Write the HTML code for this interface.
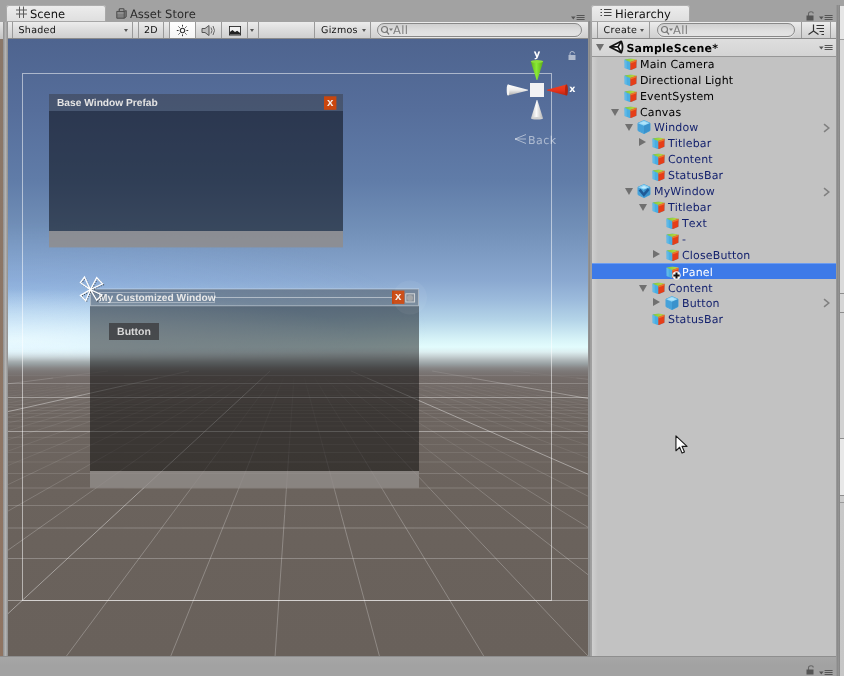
<!DOCTYPE html>
<html><head><meta charset="utf-8"><title>Unity - SampleScene</title>
<style>
html,body{margin:0;padding:0}
body{will-change:transform;width:844px;height:676px;overflow:hidden;background:#a2a2a2;position:relative;font-family:"DejaVu Sans","Liberation Sans",sans-serif;font-size:11px;color:#000;font-kerning:none;font-variant-ligatures:none;text-rendering:geometricPrecision}
.abs{position:absolute}
#leftstrip{left:0;top:39px;width:3px;height:617px;background:linear-gradient(#8a7768,#8f7462)}
#leftbar{left:3px;top:22px;width:5px;height:634px;background:linear-gradient(90deg,#8e8e8e,#b4b4b4 50%,#8e8e8e)}
#lefttb{left:0;top:22px;width:3px;height:17px;background:linear-gradient(#e6e6e6,#c4c4c4)}
.tab{position:absolute;top:5px;height:17px;border-radius:3px 3px 0 0;background:linear-gradient(#ededed,#dedede);box-shadow:0 0 0 1px rgba(120,120,120,.55) inset}
.tabtxt{position:absolute;font-size:11.5px;white-space:nowrap;line-height:14px;color:#111}
.tb{position:absolute;top:22px;height:17px;background:linear-gradient(#ececec 0%,#dedede 45%,#cfcfcf 100%);border-bottom:1px solid #8a8a8a;box-sizing:border-box}
.sep{position:absolute;top:0;width:1px;height:16px;background:#9a9a9a}
.tbt{position:absolute;top:3px;font-size:9.5px;line-height:12px;white-space:nowrap;color:#111;letter-spacing:.3px}
.dd{position:absolute;width:0;height:0;border-left:2.5px solid transparent;border-right:2.5px solid transparent;border-top:3px solid #555}
.search{position:absolute;top:1px;height:14px;border-radius:7px;border:1px solid #888;background:linear-gradient(#cfcfcf,#e0e0e0 60%,#e4e4e4);box-sizing:border-box;box-shadow:0 1px 0 rgba(255,255,255,.5)}
#scene{left:8px;top:39px;width:580px;height:617px;overflow:hidden;background:linear-gradient(180deg,#4e648f 0px,#566e9b 71px,#607ca8 141px,#7290b8 191px,#8aa8d0 241px,#9cbbdc 261px,#b4d4e8 281px,#d8f4f8 301px,#e2fcfd 308px,#dceef0 313px,#c8d4d6 317px,#b0b8ba 321px,#98a0a2 325px,#878686 329px,#7d7978 332px,#746c69 338px,#6f6763 350px,#6d6560 380px,#6b635d 450px,#6a625c 500px,#69615b 617px)}
#glow{left:0;top:0;width:580px;height:330px;background:radial-gradient(ellipse 340px 52px at 10px 302px,rgba(240,253,255,.8),rgba(240,253,255,0) 100%),radial-gradient(ellipse 420px 110px at 0px 290px,rgba(150,195,255,.35),rgba(150,195,255,0) 100%);-webkit-mask-image:linear-gradient(180deg,#000 0,#000 309px,transparent 323px);mask-image:linear-gradient(180deg,#000 0,#000 309px,transparent 323px)}
#hier{left:592px;top:39px;width:244px;height:617px;background:#c2c2c2;overflow:hidden}
.row{position:absolute;left:0;width:244px;height:16px}
.row.sel{background:#3d7ae8;box-shadow:0 1px 0 #6c9cf0 inset}
.lb{position:absolute;top:3px;line-height:14px;white-space:nowrap;font-size:11px;letter-spacing:.15px}
.icw{position:absolute;top:2px;margin-left:-0.7px;width:15px;height:13px}
.ic{display:block}
.plus{position:absolute;top:6.5px;margin-left:-0.3px}
.ad{position:absolute;top:5.5px;margin-left:-0.5px;width:0;height:0;border-left:4.3px solid transparent;border-right:4.3px solid transparent;border-top:7.5px solid #707070}
.ar{position:absolute;top:3.5px;margin-left:-1px;width:0;height:0;border-top:4.5px solid transparent;border-bottom:4.5px solid transparent;border-left:7.5px solid #707070}
.chev{position:absolute;left:231px;top:4px}
</style></head>
<body>
<svg class="abs" width="0" height="0" style="left:0;top:0"><defs><linearGradient id="ct" x1="0" y1="0" x2="1" y2="0"><stop offset="0" stop-color="#7cc440"/><stop offset=".55" stop-color="#a4d43c"/><stop offset="1" stop-color="#e0c838"/></linearGradient></defs></svg>
<!-- left neighbouring panel sliver -->
<div id="lefttb" class="abs"></div>
<div id="leftstrip" class="abs"></div>
<div id="leftbar" class="abs"></div>

<!-- Scene tab strip -->
<div class="tab" style="left:6px;width:100px"></div>
<svg class="abs" style="left:15px;top:6.2px" width="13" height="13" viewBox="0 0 13 13"><path d="M4.5 0.5V12M8.5 0.5V12M1 4H12M1 8H12" stroke="#5a5a5a" stroke-width="1" fill="none"/></svg>
<div class="tabtxt" style="left:30px;top:7px">Scene</div>
<svg class="abs" style="left:116.4px;top:7.6px" width="11" height="11" viewBox="0 0 11 11"><path d="M3.2 3.4V1.6Q3.2 0.7 4.2 0.7H7Q8 0.7 8 1.6V3.4" stroke="#4a4a4a" stroke-width="1.1" fill="none"/><path d="M0.8 3.4H8.2L10.2 2.6V8.8L8.2 10.2H0.8Z" fill="#7e7e7e" stroke="#4a4a4a" stroke-width="1" stroke-linejoin="round"/><path d="M8.2 3.4V10.2" stroke="#4a4a4a" stroke-width="0.9"/><path d="M1.4 5H7.6" stroke="#a8a8a8" stroke-width="0.8"/></svg>
<div class="tabtxt" style="left:130px;top:7px;color:#2a2a2a">Asset Store</div>
<svg class="abs" style="left:571px;top:14.6px" width="14" height="6" viewBox="0 0 14 6"><path d="M0 1.6H4.6L2.3 4.6Z" fill="#555"/><path d="M5.6 0.5H13.6M5.6 2.5H13.6M5.6 4.5H13.6" stroke="#555" stroke-width="1"/></svg>

<!-- Scene toolbar -->
<div class="tb" style="left:8px;width:580px">
  <div class="sep" style="left:4px"></div>
  <div class="tbt" style="left:10.5px">Shaded</div>
  <div class="dd" style="left:116.4px;top:6.5px"></div>
  <div class="sep" style="left:124px"></div>
  <div class="sep" style="left:130px"></div>
  <div class="tbt" style="left:136px">2D</div>
  <div class="sep" style="left:155px"></div>
  <div class="abs" style="left:162px;top:0;width:25px;height:16px;background:linear-gradient(#ffffff,#f4f4f4)"></div>
  <div class="sep" style="left:161px"></div>
  <svg class="abs" style="left:168px;top:2px" width="13" height="13" viewBox="0 0 13 13"><circle cx="6.5" cy="6.5" r="2.2" fill="none" stroke="#333" stroke-width="1.1"/><path d="M6.5 0.8V2.6M6.5 10.4V12.2M0.8 6.5H2.6M10.4 6.5H12.2M2.5 2.5L3.7 3.7M9.3 9.3L10.5 10.5M2.5 10.5L3.7 9.3M9.3 3.7L10.5 2.5" stroke="#333" stroke-width="1"/></svg>
  <div class="sep" style="left:187px"></div>
  <svg class="abs" style="left:193px;top:2px" width="16" height="13" viewBox="0 0 16 13"><path d="M1 4.5H4L8 1.5V11.5L4 8.5H1Z" fill="#bdbdbd" stroke="#555" stroke-width="1"/><path d="M10 3.5Q12 6.5 10 9.5M12 2Q15 6.5 12 11" stroke="#666" stroke-width="1" fill="none"/></svg>
  <div class="sep" style="left:213px"></div>
  <svg class="abs" style="left:221px;top:4px" width="12" height="9.5" viewBox="0 0 14 11"><rect x="0.5" y="0.5" width="13" height="10" fill="#f2f2f2" stroke="#222" stroke-width="1"/><path d="M1 10V7L4 4.5L7 7L9.5 5.5L13 8V10Z" fill="#222"/></svg>
  <div class="sep" style="left:239px"></div>
  <div class="dd" style="left:242px;top:6.5px"></div>
  <div class="sep" style="left:250px"></div>
  <div class="sep" style="left:306px"></div>
  <div class="tbt" style="left:313px">Gizmos</div>
  <div class="dd" style="left:353.5px;top:6.5px"></div>
  <div class="sep" style="left:362px"></div>
  <div class="search" style="left:369px;width:204.5px"></div>
  <svg class="abs" style="left:372px;top:3px" width="14" height="11" viewBox="0 0 14 11"><circle cx="4.5" cy="4.5" r="3" fill="none" stroke="#777" stroke-width="1.2"/><path d="M6.7 6.7L9 9.5" stroke="#777" stroke-width="1.3"/><path d="M9 3.5H13L11 6Z" fill="#777"/></svg>
  <div class="tbt" style="left:385px;top:2px;color:#7c7c7c;font-size:11.5px;letter-spacing:.3px">All</div>
</div>

<!-- Scene view -->
<div id="scene" class="abs">
<div id="glow" class="abs"></div>
<svg class="abs" style="left:0;top:0" width="580" height="617" viewBox="8 39 580 617">
<defs>
<linearGradient id="gG" x1="0" y1="0" x2="1" y2="0"><stop offset="0" stop-color="#5fb01c"/><stop offset=".45" stop-color="#8aea34"/><stop offset="1" stop-color="#5aa818"/></linearGradient>
<linearGradient id="gR" x1="0" y1="0" x2="0" y2="1"><stop offset="0" stop-color="#f0401c"/><stop offset=".5" stop-color="#e8341c"/><stop offset="1" stop-color="#b82410"/></linearGradient>
<linearGradient id="gW1" x1="0" y1="0" x2="0" y2="1"><stop offset="0" stop-color="#ffffff"/><stop offset=".5" stop-color="#ececec"/><stop offset="1" stop-color="#a8a8a8"/></linearGradient>
<linearGradient id="gW2" x1="0" y1="0" x2="1" y2="0"><stop offset="0" stop-color="#c4c4c4"/><stop offset=".45" stop-color="#fafafa"/><stop offset="1" stop-color="#b4b4b4"/></linearGradient>
<linearGradient id="fade" gradientUnits="userSpaceOnUse" x1="0" y1="352" x2="0" y2="520"><stop offset="0" stop-color="#fff" stop-opacity="0"/><stop offset="0.12" stop-color="#fff" stop-opacity="0.35"/><stop offset="0.5" stop-color="#fff" stop-opacity="0.8"/><stop offset="1" stop-color="#fff" stop-opacity="1"/></linearGradient>
<mask id="gm" maskUnits="userSpaceOnUse" x="8" y="39" width="580" height="617"><rect x="8" y="352" width="580" height="304" fill="url(#fade)"/></mask>
</defs>
<!-- grid -->
<g stroke="#fff" stroke-width="1">
<line x1="108.1" y1="371.0" x2="53.3" y2="378.0" stroke-opacity="0.059"/>
<line x1="53.3" y1="378.0" x2="8.0" y2="383.8" stroke-opacity="0.160"/>
<line x1="17.0" y1="386.0" x2="8.0" y2="387.3" stroke-opacity="0.015"/>
<line x1="30.1" y1="386.0" x2="8.0" y2="389.2" stroke-opacity="0.020"/>
<line x1="43.3" y1="386.0" x2="8.0" y2="391.4" stroke-opacity="0.025"/>
<line x1="56.4" y1="386.0" x2="8.0" y2="393.9" stroke-opacity="0.031"/>
<line x1="69.6" y1="386.0" x2="17.4" y2="395.0" stroke-opacity="0.034"/>
<line x1="17.4" y1="395.0" x2="8.0" y2="396.6" stroke-opacity="0.045"/>
<line x1="82.8" y1="386.0" x2="33.6" y2="395.0" stroke-opacity="0.036"/>
<line x1="33.6" y1="395.0" x2="8.0" y2="399.7" stroke-opacity="0.050"/>
<line x1="95.9" y1="386.0" x2="49.8" y2="395.0" stroke-opacity="0.038"/>
<line x1="49.8" y1="395.0" x2="8.0" y2="403.1" stroke-opacity="0.056"/>
<line x1="147.4" y1="378.0" x2="109.1" y2="386.0" stroke-opacity="0.013"/>
<line x1="109.1" y1="386.0" x2="66.0" y2="395.0" stroke-opacity="0.040"/>
<line x1="66.0" y1="395.0" x2="18.0" y2="405.0" stroke-opacity="0.059"/>
<line x1="18.0" y1="405.0" x2="8.0" y2="407.1" stroke-opacity="0.068"/>
<line x1="189.1" y1="371.0" x2="157.9" y2="378.0" stroke-opacity="0.108"/>
<line x1="157.9" y1="378.0" x2="122.3" y2="386.0" stroke-opacity="0.233"/>
<line x1="122.3" y1="386.0" x2="82.2" y2="395.0" stroke-opacity="0.321"/>
<line x1="82.2" y1="395.0" x2="37.6" y2="405.0" stroke-opacity="0.383"/>
<line x1="37.6" y1="405.0" x2="8.0" y2="411.6" stroke-opacity="0.400"/>
<line x1="168.4" y1="378.0" x2="135.4" y2="386.0" stroke-opacity="0.016"/>
<line x1="135.4" y1="386.0" x2="98.4" y2="395.0" stroke-opacity="0.044"/>
<line x1="98.4" y1="395.0" x2="57.2" y2="405.0" stroke-opacity="0.063"/>
<line x1="57.2" y1="405.0" x2="11.9" y2="416.0" stroke-opacity="0.075"/>
<line x1="11.9" y1="416.0" x2="8.0" y2="416.9" stroke-opacity="0.075"/>
<line x1="178.8" y1="378.0" x2="148.6" y2="386.0" stroke-opacity="0.017"/>
<line x1="148.6" y1="386.0" x2="114.6" y2="395.0" stroke-opacity="0.045"/>
<line x1="114.6" y1="395.0" x2="76.8" y2="405.0" stroke-opacity="0.065"/>
<line x1="76.8" y1="405.0" x2="35.2" y2="416.0" stroke-opacity="0.075"/>
<line x1="35.2" y1="416.0" x2="8.0" y2="423.2" stroke-opacity="0.075"/>
<line x1="189.3" y1="378.0" x2="161.7" y2="386.0" stroke-opacity="0.018"/>
<line x1="161.7" y1="386.0" x2="130.8" y2="395.0" stroke-opacity="0.047"/>
<line x1="130.8" y1="395.0" x2="96.3" y2="405.0" stroke-opacity="0.067"/>
<line x1="96.3" y1="405.0" x2="58.5" y2="416.0" stroke-opacity="0.075"/>
<line x1="58.5" y1="416.0" x2="17.1" y2="428.0" stroke-opacity="0.075"/>
<line x1="17.1" y1="428.0" x2="8.0" y2="430.7" stroke-opacity="0.075"/>
<line x1="199.7" y1="378.0" x2="174.9" y2="386.0" stroke-opacity="0.020"/>
<line x1="174.9" y1="386.0" x2="147.0" y2="395.0" stroke-opacity="0.048"/>
<line x1="147.0" y1="395.0" x2="115.9" y2="405.0" stroke-opacity="0.068"/>
<line x1="115.9" y1="405.0" x2="81.7" y2="416.0" stroke-opacity="0.075"/>
<line x1="81.7" y1="416.0" x2="44.5" y2="428.0" stroke-opacity="0.075"/>
<line x1="44.5" y1="428.0" x2="8.0" y2="439.8" stroke-opacity="0.075"/>
<line x1="210.2" y1="378.0" x2="188.1" y2="386.0" stroke-opacity="0.020"/>
<line x1="188.1" y1="386.0" x2="163.2" y2="395.0" stroke-opacity="0.049"/>
<line x1="163.2" y1="395.0" x2="135.5" y2="405.0" stroke-opacity="0.070"/>
<line x1="135.5" y1="405.0" x2="105.0" y2="416.0" stroke-opacity="0.075"/>
<line x1="105.0" y1="416.0" x2="71.8" y2="428.0" stroke-opacity="0.075"/>
<line x1="71.8" y1="428.0" x2="35.8" y2="441.0" stroke-opacity="0.075"/>
<line x1="35.8" y1="441.0" x2="8.0" y2="451.1" stroke-opacity="0.075"/>
<line x1="220.7" y1="378.0" x2="201.2" y2="386.0" stroke-opacity="0.021"/>
<line x1="201.2" y1="386.0" x2="179.4" y2="395.0" stroke-opacity="0.050"/>
<line x1="179.4" y1="395.0" x2="155.1" y2="405.0" stroke-opacity="0.071"/>
<line x1="155.1" y1="405.0" x2="128.3" y2="416.0" stroke-opacity="0.075"/>
<line x1="128.3" y1="416.0" x2="99.2" y2="428.0" stroke-opacity="0.075"/>
<line x1="99.2" y1="428.0" x2="67.6" y2="441.0" stroke-opacity="0.075"/>
<line x1="67.6" y1="441.0" x2="33.5" y2="455.0" stroke-opacity="0.075"/>
<line x1="33.5" y1="455.0" x2="8.0" y2="465.5" stroke-opacity="0.075"/>
<line x1="231.1" y1="378.0" x2="214.4" y2="386.0" stroke-opacity="0.022"/>
<line x1="214.4" y1="386.0" x2="195.6" y2="395.0" stroke-opacity="0.051"/>
<line x1="195.6" y1="395.0" x2="174.6" y2="405.0" stroke-opacity="0.072"/>
<line x1="174.6" y1="405.0" x2="151.6" y2="416.0" stroke-opacity="0.075"/>
<line x1="151.6" y1="416.0" x2="126.5" y2="428.0" stroke-opacity="0.075"/>
<line x1="126.5" y1="428.0" x2="99.3" y2="441.0" stroke-opacity="0.075"/>
<line x1="99.3" y1="441.0" x2="70.0" y2="455.0" stroke-opacity="0.075"/>
<line x1="70.0" y1="455.0" x2="38.6" y2="470.0" stroke-opacity="0.095"/>
<line x1="38.6" y1="470.0" x2="8.0" y2="484.6" stroke-opacity="0.124"/>
<line x1="241.6" y1="378.0" x2="227.6" y2="386.0" stroke-opacity="0.023"/>
<line x1="227.6" y1="386.0" x2="211.8" y2="395.0" stroke-opacity="0.052"/>
<line x1="211.8" y1="395.0" x2="194.2" y2="405.0" stroke-opacity="0.073"/>
<line x1="194.2" y1="405.0" x2="174.9" y2="416.0" stroke-opacity="0.075"/>
<line x1="174.9" y1="416.0" x2="153.8" y2="428.0" stroke-opacity="0.075"/>
<line x1="153.8" y1="428.0" x2="131.0" y2="441.0" stroke-opacity="0.075"/>
<line x1="131.0" y1="441.0" x2="106.4" y2="455.0" stroke-opacity="0.075"/>
<line x1="106.4" y1="455.0" x2="80.1" y2="470.0" stroke-opacity="0.107"/>
<line x1="80.1" y1="470.0" x2="45.0" y2="490.0" stroke-opacity="0.143"/>
<line x1="45.0" y1="490.0" x2="8.0" y2="511.1" stroke-opacity="0.174"/>
<line x1="252.1" y1="378.0" x2="240.7" y2="386.0" stroke-opacity="0.023"/>
<line x1="240.7" y1="386.0" x2="228.0" y2="395.0" stroke-opacity="0.052"/>
<line x1="228.0" y1="395.0" x2="213.8" y2="405.0" stroke-opacity="0.074"/>
<line x1="213.8" y1="405.0" x2="198.2" y2="416.0" stroke-opacity="0.075"/>
<line x1="198.2" y1="416.0" x2="181.2" y2="428.0" stroke-opacity="0.075"/>
<line x1="181.2" y1="428.0" x2="162.7" y2="441.0" stroke-opacity="0.075"/>
<line x1="162.7" y1="441.0" x2="142.9" y2="455.0" stroke-opacity="0.077"/>
<line x1="142.9" y1="455.0" x2="121.6" y2="470.0" stroke-opacity="0.118"/>
<line x1="121.6" y1="470.0" x2="93.3" y2="490.0" stroke-opacity="0.155"/>
<line x1="93.3" y1="490.0" x2="57.8" y2="515.0" stroke-opacity="0.190"/>
<line x1="57.8" y1="515.0" x2="15.3" y2="545.0" stroke-opacity="0.220"/>
<line x1="15.3" y1="545.0" x2="8.0" y2="550.2" stroke-opacity="0.234"/>
<line x1="270.1" y1="371.0" x2="262.5" y2="378.0" stroke-opacity="0.131"/>
<line x1="262.5" y1="378.0" x2="253.9" y2="386.0" stroke-opacity="0.263"/>
<line x1="253.9" y1="386.0" x2="244.2" y2="395.0" stroke-opacity="0.356"/>
<line x1="244.2" y1="395.0" x2="233.4" y2="405.0" stroke-opacity="0.400"/>
<line x1="233.4" y1="405.0" x2="221.5" y2="416.0" stroke-opacity="0.400"/>
<line x1="221.5" y1="416.0" x2="208.5" y2="428.0" stroke-opacity="0.400"/>
<line x1="208.5" y1="428.0" x2="194.5" y2="441.0" stroke-opacity="0.400"/>
<line x1="194.5" y1="441.0" x2="179.3" y2="455.0" stroke-opacity="0.400"/>
<line x1="179.3" y1="455.0" x2="163.1" y2="470.0" stroke-opacity="0.400"/>
<line x1="163.1" y1="470.0" x2="141.5" y2="490.0" stroke-opacity="0.400"/>
<line x1="141.5" y1="490.0" x2="114.5" y2="515.0" stroke-opacity="0.400"/>
<line x1="114.5" y1="515.0" x2="82.1" y2="545.0" stroke-opacity="0.400"/>
<line x1="82.1" y1="545.0" x2="44.3" y2="580.0" stroke-opacity="0.400"/>
<line x1="44.3" y1="580.0" x2="8.0" y2="613.6" stroke-opacity="0.400"/>
<line x1="273.0" y1="378.0" x2="267.0" y2="386.0" stroke-opacity="0.024"/>
<line x1="267.0" y1="386.0" x2="260.4" y2="395.0" stroke-opacity="0.053"/>
<line x1="260.4" y1="395.0" x2="252.9" y2="405.0" stroke-opacity="0.075"/>
<line x1="252.9" y1="405.0" x2="244.8" y2="416.0" stroke-opacity="0.075"/>
<line x1="244.8" y1="416.0" x2="235.8" y2="428.0" stroke-opacity="0.075"/>
<line x1="235.8" y1="428.0" x2="226.2" y2="441.0" stroke-opacity="0.075"/>
<line x1="226.2" y1="441.0" x2="215.8" y2="455.0" stroke-opacity="0.091"/>
<line x1="215.8" y1="455.0" x2="204.7" y2="470.0" stroke-opacity="0.134"/>
<line x1="204.7" y1="470.0" x2="189.8" y2="490.0" stroke-opacity="0.173"/>
<line x1="189.8" y1="490.0" x2="171.2" y2="515.0" stroke-opacity="0.210"/>
<line x1="171.2" y1="515.0" x2="149.0" y2="545.0" stroke-opacity="0.243"/>
<line x1="149.0" y1="545.0" x2="123.0" y2="580.0" stroke-opacity="0.250"/>
<line x1="123.0" y1="580.0" x2="93.3" y2="620.0" stroke-opacity="0.250"/>
<line x1="93.3" y1="620.0" x2="66.5" y2="656.0" stroke-opacity="0.250"/>
<line x1="283.4" y1="378.0" x2="280.2" y2="386.0" stroke-opacity="0.024"/>
<line x1="280.2" y1="386.0" x2="276.6" y2="395.0" stroke-opacity="0.054"/>
<line x1="276.6" y1="395.0" x2="272.5" y2="405.0" stroke-opacity="0.075"/>
<line x1="272.5" y1="405.0" x2="268.0" y2="416.0" stroke-opacity="0.075"/>
<line x1="268.0" y1="416.0" x2="263.2" y2="428.0" stroke-opacity="0.075"/>
<line x1="263.2" y1="428.0" x2="257.9" y2="441.0" stroke-opacity="0.075"/>
<line x1="257.9" y1="441.0" x2="252.2" y2="455.0" stroke-opacity="0.095"/>
<line x1="252.2" y1="455.0" x2="246.2" y2="470.0" stroke-opacity="0.138"/>
<line x1="246.2" y1="470.0" x2="238.1" y2="490.0" stroke-opacity="0.178"/>
<line x1="238.1" y1="490.0" x2="227.9" y2="515.0" stroke-opacity="0.216"/>
<line x1="227.9" y1="515.0" x2="215.8" y2="545.0" stroke-opacity="0.249"/>
<line x1="215.8" y1="545.0" x2="201.6" y2="580.0" stroke-opacity="0.250"/>
<line x1="201.6" y1="580.0" x2="185.4" y2="620.0" stroke-opacity="0.250"/>
<line x1="185.4" y1="620.0" x2="170.8" y2="656.0" stroke-opacity="0.250"/>
<line x1="293.9" y1="378.0" x2="293.4" y2="386.0" stroke-opacity="0.024"/>
<line x1="293.4" y1="386.0" x2="292.8" y2="395.0" stroke-opacity="0.054"/>
<line x1="292.8" y1="395.0" x2="292.1" y2="405.0" stroke-opacity="0.075"/>
<line x1="292.1" y1="405.0" x2="291.3" y2="416.0" stroke-opacity="0.075"/>
<line x1="291.3" y1="416.0" x2="290.5" y2="428.0" stroke-opacity="0.075"/>
<line x1="290.5" y1="428.0" x2="289.6" y2="441.0" stroke-opacity="0.075"/>
<line x1="289.6" y1="441.0" x2="288.7" y2="455.0" stroke-opacity="0.096"/>
<line x1="288.7" y1="455.0" x2="287.7" y2="470.0" stroke-opacity="0.140"/>
<line x1="287.7" y1="470.0" x2="286.3" y2="490.0" stroke-opacity="0.180"/>
<line x1="286.3" y1="490.0" x2="284.6" y2="515.0" stroke-opacity="0.218"/>
<line x1="284.6" y1="515.0" x2="282.6" y2="545.0" stroke-opacity="0.250"/>
<line x1="282.6" y1="545.0" x2="280.2" y2="580.0" stroke-opacity="0.250"/>
<line x1="280.2" y1="580.0" x2="277.5" y2="620.0" stroke-opacity="0.250"/>
<line x1="277.5" y1="620.0" x2="275.1" y2="656.0" stroke-opacity="0.250"/>
<line x1="304.4" y1="378.0" x2="306.5" y2="386.0" stroke-opacity="0.024"/>
<line x1="306.5" y1="386.0" x2="309.0" y2="395.0" stroke-opacity="0.054"/>
<line x1="309.0" y1="395.0" x2="311.7" y2="405.0" stroke-opacity="0.075"/>
<line x1="311.7" y1="405.0" x2="314.6" y2="416.0" stroke-opacity="0.075"/>
<line x1="314.6" y1="416.0" x2="317.9" y2="428.0" stroke-opacity="0.075"/>
<line x1="317.9" y1="428.0" x2="321.4" y2="441.0" stroke-opacity="0.075"/>
<line x1="321.4" y1="441.0" x2="325.1" y2="455.0" stroke-opacity="0.096"/>
<line x1="325.1" y1="455.0" x2="329.2" y2="470.0" stroke-opacity="0.139"/>
<line x1="329.2" y1="470.0" x2="334.6" y2="490.0" stroke-opacity="0.179"/>
<line x1="334.6" y1="490.0" x2="341.3" y2="515.0" stroke-opacity="0.217"/>
<line x1="341.3" y1="515.0" x2="349.4" y2="545.0" stroke-opacity="0.250"/>
<line x1="349.4" y1="545.0" x2="358.9" y2="580.0" stroke-opacity="0.250"/>
<line x1="358.9" y1="580.0" x2="369.7" y2="620.0" stroke-opacity="0.250"/>
<line x1="369.7" y1="620.0" x2="379.4" y2="656.0" stroke-opacity="0.250"/>
<line x1="314.8" y1="378.0" x2="319.7" y2="386.0" stroke-opacity="0.024"/>
<line x1="319.7" y1="386.0" x2="325.2" y2="395.0" stroke-opacity="0.054"/>
<line x1="325.2" y1="395.0" x2="331.2" y2="405.0" stroke-opacity="0.075"/>
<line x1="331.2" y1="405.0" x2="337.9" y2="416.0" stroke-opacity="0.075"/>
<line x1="337.9" y1="416.0" x2="345.2" y2="428.0" stroke-opacity="0.075"/>
<line x1="345.2" y1="428.0" x2="353.1" y2="441.0" stroke-opacity="0.075"/>
<line x1="353.1" y1="441.0" x2="361.6" y2="455.0" stroke-opacity="0.093"/>
<line x1="361.6" y1="455.0" x2="370.7" y2="470.0" stroke-opacity="0.136"/>
<line x1="370.7" y1="470.0" x2="382.9" y2="490.0" stroke-opacity="0.175"/>
<line x1="382.9" y1="490.0" x2="398.0" y2="515.0" stroke-opacity="0.213"/>
<line x1="398.0" y1="515.0" x2="416.3" y2="545.0" stroke-opacity="0.246"/>
<line x1="416.3" y1="545.0" x2="437.5" y2="580.0" stroke-opacity="0.250"/>
<line x1="437.5" y1="580.0" x2="461.8" y2="620.0" stroke-opacity="0.250"/>
<line x1="461.8" y1="620.0" x2="483.7" y2="656.0" stroke-opacity="0.250"/>
<line x1="325.3" y1="378.0" x2="332.9" y2="386.0" stroke-opacity="0.024"/>
<line x1="332.9" y1="386.0" x2="341.4" y2="395.0" stroke-opacity="0.053"/>
<line x1="341.4" y1="395.0" x2="350.8" y2="405.0" stroke-opacity="0.075"/>
<line x1="350.8" y1="405.0" x2="361.2" y2="416.0" stroke-opacity="0.075"/>
<line x1="361.2" y1="416.0" x2="372.5" y2="428.0" stroke-opacity="0.075"/>
<line x1="372.5" y1="428.0" x2="384.8" y2="441.0" stroke-opacity="0.075"/>
<line x1="384.8" y1="441.0" x2="398.0" y2="455.0" stroke-opacity="0.088"/>
<line x1="398.0" y1="455.0" x2="412.2" y2="470.0" stroke-opacity="0.130"/>
<line x1="412.2" y1="470.0" x2="431.1" y2="490.0" stroke-opacity="0.169"/>
<line x1="431.1" y1="490.0" x2="454.7" y2="515.0" stroke-opacity="0.205"/>
<line x1="454.7" y1="515.0" x2="483.1" y2="545.0" stroke-opacity="0.237"/>
<line x1="483.1" y1="545.0" x2="516.2" y2="580.0" stroke-opacity="0.250"/>
<line x1="516.2" y1="580.0" x2="554.0" y2="620.0" stroke-opacity="0.250"/>
<line x1="554.0" y1="620.0" x2="588.0" y2="656.0" stroke-opacity="0.250"/>
<line x1="335.8" y1="378.0" x2="346.0" y2="386.0" stroke-opacity="0.023"/>
<line x1="346.0" y1="386.0" x2="357.6" y2="395.0" stroke-opacity="0.053"/>
<line x1="357.6" y1="395.0" x2="370.4" y2="405.0" stroke-opacity="0.074"/>
<line x1="370.4" y1="405.0" x2="384.5" y2="416.0" stroke-opacity="0.075"/>
<line x1="384.5" y1="416.0" x2="399.9" y2="428.0" stroke-opacity="0.075"/>
<line x1="399.9" y1="428.0" x2="416.5" y2="441.0" stroke-opacity="0.075"/>
<line x1="416.5" y1="441.0" x2="434.5" y2="455.0" stroke-opacity="0.081"/>
<line x1="434.5" y1="455.0" x2="453.7" y2="470.0" stroke-opacity="0.122"/>
<line x1="453.7" y1="470.0" x2="479.4" y2="490.0" stroke-opacity="0.160"/>
<line x1="479.4" y1="490.0" x2="511.4" y2="515.0" stroke-opacity="0.195"/>
<line x1="511.4" y1="515.0" x2="549.9" y2="545.0" stroke-opacity="0.225"/>
<line x1="549.9" y1="545.0" x2="588.0" y2="574.7" stroke-opacity="0.248"/>
<line x1="346.2" y1="378.0" x2="359.2" y2="386.0" stroke-opacity="0.023"/>
<line x1="359.2" y1="386.0" x2="373.8" y2="395.0" stroke-opacity="0.052"/>
<line x1="373.8" y1="395.0" x2="390.0" y2="405.0" stroke-opacity="0.073"/>
<line x1="390.0" y1="405.0" x2="407.8" y2="416.0" stroke-opacity="0.075"/>
<line x1="407.8" y1="416.0" x2="427.2" y2="428.0" stroke-opacity="0.075"/>
<line x1="427.2" y1="428.0" x2="448.3" y2="441.0" stroke-opacity="0.075"/>
<line x1="448.3" y1="441.0" x2="470.9" y2="455.0" stroke-opacity="0.075"/>
<line x1="470.9" y1="455.0" x2="495.2" y2="470.0" stroke-opacity="0.112"/>
<line x1="495.2" y1="470.0" x2="527.6" y2="490.0" stroke-opacity="0.148"/>
<line x1="527.6" y1="490.0" x2="568.1" y2="515.0" stroke-opacity="0.182"/>
<line x1="568.1" y1="515.0" x2="588.0" y2="527.3" stroke-opacity="0.202"/>
<line x1="356.7" y1="378.0" x2="372.3" y2="386.0" stroke-opacity="0.022"/>
<line x1="372.3" y1="386.0" x2="390.0" y2="395.0" stroke-opacity="0.051"/>
<line x1="390.0" y1="395.0" x2="409.5" y2="405.0" stroke-opacity="0.073"/>
<line x1="409.5" y1="405.0" x2="431.1" y2="416.0" stroke-opacity="0.075"/>
<line x1="431.1" y1="416.0" x2="454.5" y2="428.0" stroke-opacity="0.075"/>
<line x1="454.5" y1="428.0" x2="480.0" y2="441.0" stroke-opacity="0.075"/>
<line x1="480.0" y1="441.0" x2="507.4" y2="455.0" stroke-opacity="0.075"/>
<line x1="507.4" y1="455.0" x2="536.8" y2="470.0" stroke-opacity="0.100"/>
<line x1="536.8" y1="470.0" x2="575.9" y2="490.0" stroke-opacity="0.135"/>
<line x1="575.9" y1="490.0" x2="588.0" y2="496.2" stroke-opacity="0.155"/>
<line x1="351.1" y1="371.0" x2="367.1" y2="378.0" stroke-opacity="0.126"/>
<line x1="367.1" y1="378.0" x2="385.5" y2="386.0" stroke-opacity="0.256"/>
<line x1="385.5" y1="386.0" x2="406.2" y2="395.0" stroke-opacity="0.348"/>
<line x1="406.2" y1="395.0" x2="429.1" y2="405.0" stroke-opacity="0.400"/>
<line x1="429.1" y1="405.0" x2="454.3" y2="416.0" stroke-opacity="0.400"/>
<line x1="454.3" y1="416.0" x2="481.9" y2="428.0" stroke-opacity="0.400"/>
<line x1="481.9" y1="428.0" x2="511.7" y2="441.0" stroke-opacity="0.400"/>
<line x1="511.7" y1="441.0" x2="543.8" y2="455.0" stroke-opacity="0.400"/>
<line x1="543.8" y1="455.0" x2="578.3" y2="470.0" stroke-opacity="0.400"/>
<line x1="578.3" y1="470.0" x2="588.0" y2="474.2" stroke-opacity="0.400"/>
<line x1="377.6" y1="378.0" x2="398.7" y2="386.0" stroke-opacity="0.021"/>
<line x1="398.7" y1="386.0" x2="422.4" y2="395.0" stroke-opacity="0.049"/>
<line x1="422.4" y1="395.0" x2="448.7" y2="405.0" stroke-opacity="0.070"/>
<line x1="448.7" y1="405.0" x2="477.6" y2="416.0" stroke-opacity="0.075"/>
<line x1="477.6" y1="416.0" x2="509.2" y2="428.0" stroke-opacity="0.075"/>
<line x1="509.2" y1="428.0" x2="543.4" y2="441.0" stroke-opacity="0.075"/>
<line x1="543.4" y1="441.0" x2="580.3" y2="455.0" stroke-opacity="0.075"/>
<line x1="580.3" y1="455.0" x2="588.0" y2="457.9" stroke-opacity="0.075"/>
<line x1="388.1" y1="378.0" x2="411.8" y2="386.0" stroke-opacity="0.020"/>
<line x1="411.8" y1="386.0" x2="438.6" y2="395.0" stroke-opacity="0.048"/>
<line x1="438.6" y1="395.0" x2="468.3" y2="405.0" stroke-opacity="0.069"/>
<line x1="468.3" y1="405.0" x2="500.9" y2="416.0" stroke-opacity="0.075"/>
<line x1="500.9" y1="416.0" x2="536.6" y2="428.0" stroke-opacity="0.075"/>
<line x1="536.6" y1="428.0" x2="575.2" y2="441.0" stroke-opacity="0.075"/>
<line x1="575.2" y1="441.0" x2="588.0" y2="445.3" stroke-opacity="0.075"/>
<line x1="398.5" y1="378.0" x2="425.0" y2="386.0" stroke-opacity="0.019"/>
<line x1="425.0" y1="386.0" x2="454.8" y2="395.0" stroke-opacity="0.047"/>
<line x1="454.8" y1="395.0" x2="487.8" y2="405.0" stroke-opacity="0.067"/>
<line x1="487.8" y1="405.0" x2="524.2" y2="416.0" stroke-opacity="0.075"/>
<line x1="524.2" y1="416.0" x2="563.9" y2="428.0" stroke-opacity="0.075"/>
<line x1="563.9" y1="428.0" x2="588.0" y2="435.3" stroke-opacity="0.075"/>
<line x1="409.0" y1="378.0" x2="438.2" y2="386.0" stroke-opacity="0.018"/>
<line x1="438.2" y1="386.0" x2="471.0" y2="395.0" stroke-opacity="0.046"/>
<line x1="471.0" y1="395.0" x2="507.4" y2="405.0" stroke-opacity="0.066"/>
<line x1="507.4" y1="405.0" x2="547.5" y2="416.0" stroke-opacity="0.075"/>
<line x1="547.5" y1="416.0" x2="588.0" y2="427.1" stroke-opacity="0.075"/>
<line x1="419.5" y1="378.0" x2="451.3" y2="386.0" stroke-opacity="0.016"/>
<line x1="451.3" y1="386.0" x2="487.2" y2="395.0" stroke-opacity="0.044"/>
<line x1="487.2" y1="395.0" x2="527.0" y2="405.0" stroke-opacity="0.064"/>
<line x1="527.0" y1="405.0" x2="570.8" y2="416.0" stroke-opacity="0.075"/>
<line x1="570.8" y1="416.0" x2="588.0" y2="420.3" stroke-opacity="0.075"/>
<line x1="429.9" y1="378.0" x2="464.5" y2="386.0" stroke-opacity="0.015"/>
<line x1="464.5" y1="386.0" x2="503.4" y2="395.0" stroke-opacity="0.043"/>
<line x1="503.4" y1="395.0" x2="546.6" y2="405.0" stroke-opacity="0.062"/>
<line x1="546.6" y1="405.0" x2="588.0" y2="414.6" stroke-opacity="0.075"/>
<line x1="440.4" y1="378.0" x2="477.6" y2="386.0" stroke-opacity="0.014"/>
<line x1="477.6" y1="386.0" x2="519.6" y2="395.0" stroke-opacity="0.041"/>
<line x1="519.6" y1="395.0" x2="566.1" y2="405.0" stroke-opacity="0.060"/>
<line x1="566.1" y1="405.0" x2="588.0" y2="409.7" stroke-opacity="0.070"/>
<line x1="450.8" y1="378.0" x2="490.8" y2="386.0" stroke-opacity="0.012"/>
<line x1="490.8" y1="386.0" x2="535.8" y2="395.0" stroke-opacity="0.039"/>
<line x1="535.8" y1="395.0" x2="585.7" y2="405.0" stroke-opacity="0.058"/>
<line x1="585.7" y1="405.0" x2="588.0" y2="405.5" stroke-opacity="0.065"/>
<line x1="504.0" y1="386.0" x2="552.0" y2="395.0" stroke-opacity="0.037"/>
<line x1="552.0" y1="395.0" x2="588.0" y2="401.8" stroke-opacity="0.053"/>
<line x1="432.1" y1="371.0" x2="471.8" y2="378.0" stroke-opacity="0.093"/>
<line x1="471.8" y1="378.0" x2="517.1" y2="386.0" stroke-opacity="0.215"/>
<line x1="517.1" y1="386.0" x2="568.2" y2="395.0" stroke-opacity="0.299"/>
<line x1="568.2" y1="395.0" x2="588.0" y2="398.5" stroke-opacity="0.340"/>
<line x1="530.3" y1="386.0" x2="584.4" y2="395.0" stroke-opacity="0.033"/>
<line x1="584.4" y1="395.0" x2="588.0" y2="395.6" stroke-opacity="0.043"/>
<line x1="543.5" y1="386.0" x2="588.0" y2="393.0" stroke-opacity="0.028"/>
<line x1="556.6" y1="386.0" x2="588.0" y2="390.7" stroke-opacity="0.023"/>
<line x1="569.8" y1="386.0" x2="588.0" y2="388.6" stroke-opacity="0.018"/>
<line x1="582.9" y1="386.0" x2="588.0" y2="386.7" stroke-opacity="0.013"/>
<line x1="513.1" y1="371.0" x2="576.4" y2="378.0" stroke-opacity="0.036"/>
<line x1="576.4" y1="378.0" x2="588.0" y2="379.3" stroke-opacity="0.105"/>
<line x1="8.0" y1="600.5" x2="66.0" y2="600.5" stroke-opacity="0.400"/>
<line x1="66.0" y1="600.5" x2="124.0" y2="600.5" stroke-opacity="0.400"/>
<line x1="124.0" y1="600.5" x2="182.0" y2="600.5" stroke-opacity="0.400"/>
<line x1="182.0" y1="600.5" x2="240.0" y2="600.5" stroke-opacity="0.400"/>
<line x1="240.0" y1="600.5" x2="298.0" y2="600.5" stroke-opacity="0.400"/>
<line x1="298.0" y1="600.5" x2="356.0" y2="600.5" stroke-opacity="0.400"/>
<line x1="356.0" y1="600.5" x2="414.0" y2="600.5" stroke-opacity="0.400"/>
<line x1="414.0" y1="600.5" x2="472.0" y2="600.5" stroke-opacity="0.400"/>
<line x1="472.0" y1="600.5" x2="530.0" y2="600.5" stroke-opacity="0.400"/>
<line x1="530.0" y1="600.5" x2="588.0" y2="600.5" stroke-opacity="0.400"/>
<line x1="8.0" y1="558.5" x2="66.0" y2="558.5" stroke-opacity="0.250"/>
<line x1="66.0" y1="558.5" x2="124.0" y2="558.5" stroke-opacity="0.250"/>
<line x1="124.0" y1="558.5" x2="182.0" y2="558.5" stroke-opacity="0.250"/>
<line x1="182.0" y1="558.5" x2="240.0" y2="558.5" stroke-opacity="0.250"/>
<line x1="240.0" y1="558.5" x2="298.0" y2="558.5" stroke-opacity="0.250"/>
<line x1="298.0" y1="558.5" x2="356.0" y2="558.5" stroke-opacity="0.250"/>
<line x1="356.0" y1="558.5" x2="414.0" y2="558.5" stroke-opacity="0.250"/>
<line x1="414.0" y1="558.5" x2="472.0" y2="558.5" stroke-opacity="0.250"/>
<line x1="472.0" y1="558.5" x2="530.0" y2="558.5" stroke-opacity="0.250"/>
<line x1="530.0" y1="558.5" x2="588.0" y2="558.5" stroke-opacity="0.249"/>
<line x1="8.0" y1="528.0" x2="66.0" y2="528.0" stroke-opacity="0.217"/>
<line x1="66.0" y1="528.0" x2="124.0" y2="528.0" stroke-opacity="0.230"/>
<line x1="124.0" y1="528.0" x2="182.0" y2="528.0" stroke-opacity="0.239"/>
<line x1="182.0" y1="528.0" x2="240.0" y2="528.0" stroke-opacity="0.246"/>
<line x1="240.0" y1="528.0" x2="298.0" y2="528.0" stroke-opacity="0.250"/>
<line x1="298.0" y1="528.0" x2="356.0" y2="528.0" stroke-opacity="0.249"/>
<line x1="356.0" y1="528.0" x2="414.0" y2="528.0" stroke-opacity="0.246"/>
<line x1="414.0" y1="528.0" x2="472.0" y2="528.0" stroke-opacity="0.239"/>
<line x1="472.0" y1="528.0" x2="530.0" y2="528.0" stroke-opacity="0.229"/>
<line x1="530.0" y1="528.0" x2="588.0" y2="528.0" stroke-opacity="0.216"/>
<line x1="8.0" y1="505.5" x2="66.0" y2="505.5" stroke-opacity="0.185"/>
<line x1="66.0" y1="505.5" x2="124.0" y2="505.5" stroke-opacity="0.199"/>
<line x1="124.0" y1="505.5" x2="182.0" y2="505.5" stroke-opacity="0.210"/>
<line x1="182.0" y1="505.5" x2="240.0" y2="505.5" stroke-opacity="0.218"/>
<line x1="240.0" y1="505.5" x2="298.0" y2="505.5" stroke-opacity="0.222"/>
<line x1="298.0" y1="505.5" x2="356.0" y2="505.5" stroke-opacity="0.222"/>
<line x1="356.0" y1="505.5" x2="414.0" y2="505.5" stroke-opacity="0.217"/>
<line x1="414.0" y1="505.5" x2="472.0" y2="505.5" stroke-opacity="0.209"/>
<line x1="472.0" y1="505.5" x2="530.0" y2="505.5" stroke-opacity="0.198"/>
<line x1="530.0" y1="505.5" x2="588.0" y2="505.5" stroke-opacity="0.184"/>
<line x1="8.0" y1="488.0" x2="66.0" y2="488.0" stroke-opacity="0.152"/>
<line x1="66.0" y1="488.0" x2="124.0" y2="488.0" stroke-opacity="0.168"/>
<line x1="124.0" y1="488.0" x2="182.0" y2="488.0" stroke-opacity="0.181"/>
<line x1="182.0" y1="488.0" x2="240.0" y2="488.0" stroke-opacity="0.190"/>
<line x1="240.0" y1="488.0" x2="298.0" y2="488.0" stroke-opacity="0.194"/>
<line x1="298.0" y1="488.0" x2="356.0" y2="488.0" stroke-opacity="0.194"/>
<line x1="356.0" y1="488.0" x2="414.0" y2="488.0" stroke-opacity="0.189"/>
<line x1="414.0" y1="488.0" x2="472.0" y2="488.0" stroke-opacity="0.180"/>
<line x1="472.0" y1="488.0" x2="530.0" y2="488.0" stroke-opacity="0.167"/>
<line x1="530.0" y1="488.0" x2="588.0" y2="488.0" stroke-opacity="0.151"/>
<line x1="8.0" y1="473.5" x2="66.0" y2="473.5" stroke-opacity="0.120"/>
<line x1="66.0" y1="473.5" x2="124.0" y2="473.5" stroke-opacity="0.138"/>
<line x1="124.0" y1="473.5" x2="182.0" y2="473.5" stroke-opacity="0.152"/>
<line x1="182.0" y1="473.5" x2="240.0" y2="473.5" stroke-opacity="0.161"/>
<line x1="240.0" y1="473.5" x2="298.0" y2="473.5" stroke-opacity="0.166"/>
<line x1="298.0" y1="473.5" x2="356.0" y2="473.5" stroke-opacity="0.166"/>
<line x1="356.0" y1="473.5" x2="414.0" y2="473.5" stroke-opacity="0.161"/>
<line x1="414.0" y1="473.5" x2="472.0" y2="473.5" stroke-opacity="0.151"/>
<line x1="472.0" y1="473.5" x2="530.0" y2="473.5" stroke-opacity="0.136"/>
<line x1="530.0" y1="473.5" x2="588.0" y2="473.5" stroke-opacity="0.118"/>
<line x1="8.0" y1="462.0" x2="66.0" y2="462.0" stroke-opacity="0.087"/>
<line x1="66.0" y1="462.0" x2="124.0" y2="462.0" stroke-opacity="0.107"/>
<line x1="124.0" y1="462.0" x2="182.0" y2="462.0" stroke-opacity="0.122"/>
<line x1="182.0" y1="462.0" x2="240.0" y2="462.0" stroke-opacity="0.133"/>
<line x1="240.0" y1="462.0" x2="298.0" y2="462.0" stroke-opacity="0.138"/>
<line x1="298.0" y1="462.0" x2="356.0" y2="462.0" stroke-opacity="0.138"/>
<line x1="356.0" y1="462.0" x2="414.0" y2="462.0" stroke-opacity="0.132"/>
<line x1="414.0" y1="462.0" x2="472.0" y2="462.0" stroke-opacity="0.121"/>
<line x1="472.0" y1="462.0" x2="530.0" y2="462.0" stroke-opacity="0.106"/>
<line x1="530.0" y1="462.0" x2="588.0" y2="462.0" stroke-opacity="0.086"/>
<line x1="8.0" y1="452.5" x2="66.0" y2="452.5" stroke-opacity="0.075"/>
<line x1="66.0" y1="452.5" x2="124.0" y2="452.5" stroke-opacity="0.076"/>
<line x1="124.0" y1="452.5" x2="182.0" y2="452.5" stroke-opacity="0.093"/>
<line x1="182.0" y1="452.5" x2="240.0" y2="452.5" stroke-opacity="0.105"/>
<line x1="240.0" y1="452.5" x2="298.0" y2="452.5" stroke-opacity="0.110"/>
<line x1="298.0" y1="452.5" x2="356.0" y2="452.5" stroke-opacity="0.110"/>
<line x1="356.0" y1="452.5" x2="414.0" y2="452.5" stroke-opacity="0.104"/>
<line x1="414.0" y1="452.5" x2="472.0" y2="452.5" stroke-opacity="0.092"/>
<line x1="472.0" y1="452.5" x2="530.0" y2="452.5" stroke-opacity="0.075"/>
<line x1="530.0" y1="452.5" x2="588.0" y2="452.5" stroke-opacity="0.075"/>
<line x1="8.0" y1="444.5" x2="66.0" y2="444.5" stroke-opacity="0.075"/>
<line x1="66.0" y1="444.5" x2="124.0" y2="444.5" stroke-opacity="0.075"/>
<line x1="124.0" y1="444.5" x2="182.0" y2="444.5" stroke-opacity="0.075"/>
<line x1="182.0" y1="444.5" x2="240.0" y2="444.5" stroke-opacity="0.076"/>
<line x1="240.0" y1="444.5" x2="298.0" y2="444.5" stroke-opacity="0.083"/>
<line x1="298.0" y1="444.5" x2="356.0" y2="444.5" stroke-opacity="0.082"/>
<line x1="356.0" y1="444.5" x2="414.0" y2="444.5" stroke-opacity="0.076"/>
<line x1="414.0" y1="444.5" x2="472.0" y2="444.5" stroke-opacity="0.075"/>
<line x1="472.0" y1="444.5" x2="530.0" y2="444.5" stroke-opacity="0.075"/>
<line x1="530.0" y1="444.5" x2="588.0" y2="444.5" stroke-opacity="0.075"/>
<line x1="8.0" y1="437.5" x2="66.0" y2="437.5" stroke-opacity="0.075"/>
<line x1="66.0" y1="437.5" x2="124.0" y2="437.5" stroke-opacity="0.075"/>
<line x1="124.0" y1="437.5" x2="182.0" y2="437.5" stroke-opacity="0.075"/>
<line x1="182.0" y1="437.5" x2="240.0" y2="437.5" stroke-opacity="0.075"/>
<line x1="240.0" y1="437.5" x2="298.0" y2="437.5" stroke-opacity="0.075"/>
<line x1="298.0" y1="437.5" x2="356.0" y2="437.5" stroke-opacity="0.075"/>
<line x1="356.0" y1="437.5" x2="414.0" y2="437.5" stroke-opacity="0.075"/>
<line x1="414.0" y1="437.5" x2="472.0" y2="437.5" stroke-opacity="0.075"/>
<line x1="472.0" y1="437.5" x2="530.0" y2="437.5" stroke-opacity="0.075"/>
<line x1="530.0" y1="437.5" x2="588.0" y2="437.5" stroke-opacity="0.075"/>
<line x1="8.0" y1="431.5" x2="66.0" y2="431.5" stroke-opacity="0.400"/>
<line x1="66.0" y1="431.5" x2="124.0" y2="431.5" stroke-opacity="0.400"/>
<line x1="124.0" y1="431.5" x2="182.0" y2="431.5" stroke-opacity="0.400"/>
<line x1="182.0" y1="431.5" x2="240.0" y2="431.5" stroke-opacity="0.400"/>
<line x1="240.0" y1="431.5" x2="298.0" y2="431.5" stroke-opacity="0.400"/>
<line x1="298.0" y1="431.5" x2="356.0" y2="431.5" stroke-opacity="0.400"/>
<line x1="356.0" y1="431.5" x2="414.0" y2="431.5" stroke-opacity="0.400"/>
<line x1="414.0" y1="431.5" x2="472.0" y2="431.5" stroke-opacity="0.400"/>
<line x1="472.0" y1="431.5" x2="530.0" y2="431.5" stroke-opacity="0.400"/>
<line x1="530.0" y1="431.5" x2="588.0" y2="431.5" stroke-opacity="0.400"/>
<line x1="8.0" y1="426.0" x2="66.0" y2="426.0" stroke-opacity="0.075"/>
<line x1="66.0" y1="426.0" x2="124.0" y2="426.0" stroke-opacity="0.075"/>
<line x1="124.0" y1="426.0" x2="182.0" y2="426.0" stroke-opacity="0.075"/>
<line x1="182.0" y1="426.0" x2="240.0" y2="426.0" stroke-opacity="0.075"/>
<line x1="240.0" y1="426.0" x2="298.0" y2="426.0" stroke-opacity="0.075"/>
<line x1="298.0" y1="426.0" x2="356.0" y2="426.0" stroke-opacity="0.075"/>
<line x1="356.0" y1="426.0" x2="414.0" y2="426.0" stroke-opacity="0.075"/>
<line x1="414.0" y1="426.0" x2="472.0" y2="426.0" stroke-opacity="0.075"/>
<line x1="472.0" y1="426.0" x2="530.0" y2="426.0" stroke-opacity="0.075"/>
<line x1="530.0" y1="426.0" x2="588.0" y2="426.0" stroke-opacity="0.075"/>
<line x1="8.0" y1="421.5" x2="66.0" y2="421.5" stroke-opacity="0.075"/>
<line x1="66.0" y1="421.5" x2="124.0" y2="421.5" stroke-opacity="0.075"/>
<line x1="124.0" y1="421.5" x2="182.0" y2="421.5" stroke-opacity="0.075"/>
<line x1="182.0" y1="421.5" x2="240.0" y2="421.5" stroke-opacity="0.075"/>
<line x1="240.0" y1="421.5" x2="298.0" y2="421.5" stroke-opacity="0.075"/>
<line x1="298.0" y1="421.5" x2="356.0" y2="421.5" stroke-opacity="0.075"/>
<line x1="356.0" y1="421.5" x2="414.0" y2="421.5" stroke-opacity="0.075"/>
<line x1="414.0" y1="421.5" x2="472.0" y2="421.5" stroke-opacity="0.075"/>
<line x1="472.0" y1="421.5" x2="530.0" y2="421.5" stroke-opacity="0.075"/>
<line x1="530.0" y1="421.5" x2="588.0" y2="421.5" stroke-opacity="0.075"/>
<line x1="8.0" y1="417.5" x2="66.0" y2="417.5" stroke-opacity="0.075"/>
<line x1="66.0" y1="417.5" x2="124.0" y2="417.5" stroke-opacity="0.075"/>
<line x1="124.0" y1="417.5" x2="182.0" y2="417.5" stroke-opacity="0.075"/>
<line x1="182.0" y1="417.5" x2="240.0" y2="417.5" stroke-opacity="0.075"/>
<line x1="240.0" y1="417.5" x2="298.0" y2="417.5" stroke-opacity="0.075"/>
<line x1="298.0" y1="417.5" x2="356.0" y2="417.5" stroke-opacity="0.075"/>
<line x1="356.0" y1="417.5" x2="414.0" y2="417.5" stroke-opacity="0.075"/>
<line x1="414.0" y1="417.5" x2="472.0" y2="417.5" stroke-opacity="0.075"/>
<line x1="472.0" y1="417.5" x2="530.0" y2="417.5" stroke-opacity="0.075"/>
<line x1="530.0" y1="417.5" x2="588.0" y2="417.5" stroke-opacity="0.075"/>
<line x1="8.0" y1="413.5" x2="66.0" y2="413.5" stroke-opacity="0.075"/>
<line x1="66.0" y1="413.5" x2="124.0" y2="413.5" stroke-opacity="0.075"/>
<line x1="124.0" y1="413.5" x2="182.0" y2="413.5" stroke-opacity="0.075"/>
<line x1="182.0" y1="413.5" x2="240.0" y2="413.5" stroke-opacity="0.075"/>
<line x1="240.0" y1="413.5" x2="298.0" y2="413.5" stroke-opacity="0.075"/>
<line x1="298.0" y1="413.5" x2="356.0" y2="413.5" stroke-opacity="0.075"/>
<line x1="356.0" y1="413.5" x2="414.0" y2="413.5" stroke-opacity="0.075"/>
<line x1="414.0" y1="413.5" x2="472.0" y2="413.5" stroke-opacity="0.075"/>
<line x1="472.0" y1="413.5" x2="530.0" y2="413.5" stroke-opacity="0.075"/>
<line x1="530.0" y1="413.5" x2="588.0" y2="413.5" stroke-opacity="0.075"/>
<line x1="8.0" y1="410.5" x2="66.0" y2="410.5" stroke-opacity="0.075"/>
<line x1="66.0" y1="410.5" x2="124.0" y2="410.5" stroke-opacity="0.075"/>
<line x1="124.0" y1="410.5" x2="182.0" y2="410.5" stroke-opacity="0.075"/>
<line x1="182.0" y1="410.5" x2="240.0" y2="410.5" stroke-opacity="0.075"/>
<line x1="240.0" y1="410.5" x2="298.0" y2="410.5" stroke-opacity="0.075"/>
<line x1="298.0" y1="410.5" x2="356.0" y2="410.5" stroke-opacity="0.075"/>
<line x1="356.0" y1="410.5" x2="414.0" y2="410.5" stroke-opacity="0.075"/>
<line x1="414.0" y1="410.5" x2="472.0" y2="410.5" stroke-opacity="0.075"/>
<line x1="472.0" y1="410.5" x2="530.0" y2="410.5" stroke-opacity="0.075"/>
<line x1="530.0" y1="410.5" x2="588.0" y2="410.5" stroke-opacity="0.075"/>
<line x1="8.0" y1="407.5" x2="66.0" y2="407.5" stroke-opacity="0.073"/>
<line x1="66.0" y1="407.5" x2="124.0" y2="407.5" stroke-opacity="0.075"/>
<line x1="124.0" y1="407.5" x2="182.0" y2="407.5" stroke-opacity="0.075"/>
<line x1="182.0" y1="407.5" x2="240.0" y2="407.5" stroke-opacity="0.075"/>
<line x1="240.0" y1="407.5" x2="298.0" y2="407.5" stroke-opacity="0.075"/>
<line x1="298.0" y1="407.5" x2="356.0" y2="407.5" stroke-opacity="0.075"/>
<line x1="356.0" y1="407.5" x2="414.0" y2="407.5" stroke-opacity="0.075"/>
<line x1="414.0" y1="407.5" x2="472.0" y2="407.5" stroke-opacity="0.075"/>
<line x1="472.0" y1="407.5" x2="530.0" y2="407.5" stroke-opacity="0.075"/>
<line x1="530.0" y1="407.5" x2="588.0" y2="407.5" stroke-opacity="0.072"/>
<line x1="8.0" y1="404.5" x2="66.0" y2="404.5" stroke-opacity="0.068"/>
<line x1="66.0" y1="404.5" x2="124.0" y2="404.5" stroke-opacity="0.074"/>
<line x1="124.0" y1="404.5" x2="182.0" y2="404.5" stroke-opacity="0.075"/>
<line x1="182.0" y1="404.5" x2="240.0" y2="404.5" stroke-opacity="0.075"/>
<line x1="240.0" y1="404.5" x2="298.0" y2="404.5" stroke-opacity="0.075"/>
<line x1="298.0" y1="404.5" x2="356.0" y2="404.5" stroke-opacity="0.075"/>
<line x1="356.0" y1="404.5" x2="414.0" y2="404.5" stroke-opacity="0.075"/>
<line x1="414.0" y1="404.5" x2="472.0" y2="404.5" stroke-opacity="0.075"/>
<line x1="472.0" y1="404.5" x2="530.0" y2="404.5" stroke-opacity="0.073"/>
<line x1="530.0" y1="404.5" x2="588.0" y2="404.5" stroke-opacity="0.067"/>
<line x1="8.0" y1="402.0" x2="66.0" y2="402.0" stroke-opacity="0.063"/>
<line x1="66.0" y1="402.0" x2="124.0" y2="402.0" stroke-opacity="0.069"/>
<line x1="124.0" y1="402.0" x2="182.0" y2="402.0" stroke-opacity="0.074"/>
<line x1="182.0" y1="402.0" x2="240.0" y2="402.0" stroke-opacity="0.075"/>
<line x1="240.0" y1="402.0" x2="298.0" y2="402.0" stroke-opacity="0.075"/>
<line x1="298.0" y1="402.0" x2="356.0" y2="402.0" stroke-opacity="0.075"/>
<line x1="356.0" y1="402.0" x2="414.0" y2="402.0" stroke-opacity="0.075"/>
<line x1="414.0" y1="402.0" x2="472.0" y2="402.0" stroke-opacity="0.074"/>
<line x1="472.0" y1="402.0" x2="530.0" y2="402.0" stroke-opacity="0.069"/>
<line x1="530.0" y1="402.0" x2="588.0" y2="402.0" stroke-opacity="0.062"/>
<line x1="8.0" y1="400.0" x2="66.0" y2="400.0" stroke-opacity="0.058"/>
<line x1="66.0" y1="400.0" x2="124.0" y2="400.0" stroke-opacity="0.064"/>
<line x1="124.0" y1="400.0" x2="182.0" y2="400.0" stroke-opacity="0.070"/>
<line x1="182.0" y1="400.0" x2="240.0" y2="400.0" stroke-opacity="0.073"/>
<line x1="240.0" y1="400.0" x2="298.0" y2="400.0" stroke-opacity="0.075"/>
<line x1="298.0" y1="400.0" x2="356.0" y2="400.0" stroke-opacity="0.075"/>
<line x1="356.0" y1="400.0" x2="414.0" y2="400.0" stroke-opacity="0.073"/>
<line x1="414.0" y1="400.0" x2="472.0" y2="400.0" stroke-opacity="0.069"/>
<line x1="472.0" y1="400.0" x2="530.0" y2="400.0" stroke-opacity="0.064"/>
<line x1="530.0" y1="400.0" x2="588.0" y2="400.0" stroke-opacity="0.058"/>
<line x1="8.0" y1="397.5" x2="66.0" y2="397.5" stroke-opacity="0.357"/>
<line x1="66.0" y1="397.5" x2="124.0" y2="397.5" stroke-opacity="0.378"/>
<line x1="124.0" y1="397.5" x2="182.0" y2="397.5" stroke-opacity="0.395"/>
<line x1="182.0" y1="397.5" x2="240.0" y2="397.5" stroke-opacity="0.400"/>
<line x1="240.0" y1="397.5" x2="298.0" y2="397.5" stroke-opacity="0.400"/>
<line x1="298.0" y1="397.5" x2="356.0" y2="397.5" stroke-opacity="0.400"/>
<line x1="356.0" y1="397.5" x2="414.0" y2="397.5" stroke-opacity="0.400"/>
<line x1="414.0" y1="397.5" x2="472.0" y2="397.5" stroke-opacity="0.394"/>
<line x1="472.0" y1="397.5" x2="530.0" y2="397.5" stroke-opacity="0.377"/>
<line x1="530.0" y1="397.5" x2="588.0" y2="397.5" stroke-opacity="0.355"/>
<line x1="8.0" y1="395.5" x2="66.0" y2="395.5" stroke-opacity="0.048"/>
<line x1="66.0" y1="395.5" x2="124.0" y2="395.5" stroke-opacity="0.055"/>
<line x1="124.0" y1="395.5" x2="182.0" y2="395.5" stroke-opacity="0.061"/>
<line x1="182.0" y1="395.5" x2="240.0" y2="395.5" stroke-opacity="0.065"/>
<line x1="240.0" y1="395.5" x2="298.0" y2="395.5" stroke-opacity="0.066"/>
<line x1="298.0" y1="395.5" x2="356.0" y2="395.5" stroke-opacity="0.066"/>
<line x1="356.0" y1="395.5" x2="414.0" y2="395.5" stroke-opacity="0.064"/>
<line x1="414.0" y1="395.5" x2="472.0" y2="395.5" stroke-opacity="0.060"/>
<line x1="472.0" y1="395.5" x2="530.0" y2="395.5" stroke-opacity="0.055"/>
<line x1="530.0" y1="395.5" x2="588.0" y2="395.5" stroke-opacity="0.048"/>
<line x1="8.0" y1="394.0" x2="66.0" y2="394.0" stroke-opacity="0.043"/>
<line x1="66.0" y1="394.0" x2="124.0" y2="394.0" stroke-opacity="0.051"/>
<line x1="124.0" y1="394.0" x2="182.0" y2="394.0" stroke-opacity="0.056"/>
<line x1="182.0" y1="394.0" x2="240.0" y2="394.0" stroke-opacity="0.060"/>
<line x1="240.0" y1="394.0" x2="298.0" y2="394.0" stroke-opacity="0.062"/>
<line x1="298.0" y1="394.0" x2="356.0" y2="394.0" stroke-opacity="0.062"/>
<line x1="356.0" y1="394.0" x2="414.0" y2="394.0" stroke-opacity="0.060"/>
<line x1="414.0" y1="394.0" x2="472.0" y2="394.0" stroke-opacity="0.056"/>
<line x1="472.0" y1="394.0" x2="530.0" y2="394.0" stroke-opacity="0.050"/>
<line x1="530.0" y1="394.0" x2="588.0" y2="394.0" stroke-opacity="0.043"/>
<line x1="8.0" y1="392.0" x2="66.0" y2="392.0" stroke-opacity="0.039"/>
<line x1="66.0" y1="392.0" x2="124.0" y2="392.0" stroke-opacity="0.046"/>
<line x1="124.0" y1="392.0" x2="182.0" y2="392.0" stroke-opacity="0.052"/>
<line x1="182.0" y1="392.0" x2="240.0" y2="392.0" stroke-opacity="0.056"/>
<line x1="240.0" y1="392.0" x2="298.0" y2="392.0" stroke-opacity="0.058"/>
<line x1="298.0" y1="392.0" x2="356.0" y2="392.0" stroke-opacity="0.058"/>
<line x1="356.0" y1="392.0" x2="414.0" y2="392.0" stroke-opacity="0.056"/>
<line x1="414.0" y1="392.0" x2="472.0" y2="392.0" stroke-opacity="0.052"/>
<line x1="472.0" y1="392.0" x2="530.0" y2="392.0" stroke-opacity="0.046"/>
<line x1="530.0" y1="392.0" x2="588.0" y2="392.0" stroke-opacity="0.038"/>
<line x1="8.0" y1="390.5" x2="66.0" y2="390.5" stroke-opacity="0.034"/>
<line x1="66.0" y1="390.5" x2="124.0" y2="390.5" stroke-opacity="0.041"/>
<line x1="124.0" y1="390.5" x2="182.0" y2="390.5" stroke-opacity="0.048"/>
<line x1="182.0" y1="390.5" x2="240.0" y2="390.5" stroke-opacity="0.052"/>
<line x1="240.0" y1="390.5" x2="298.0" y2="390.5" stroke-opacity="0.054"/>
<line x1="298.0" y1="390.5" x2="356.0" y2="390.5" stroke-opacity="0.054"/>
<line x1="356.0" y1="390.5" x2="414.0" y2="390.5" stroke-opacity="0.052"/>
<line x1="414.0" y1="390.5" x2="472.0" y2="390.5" stroke-opacity="0.047"/>
<line x1="472.0" y1="390.5" x2="530.0" y2="390.5" stroke-opacity="0.041"/>
<line x1="530.0" y1="390.5" x2="588.0" y2="390.5" stroke-opacity="0.033"/>
<line x1="8.0" y1="389.0" x2="66.0" y2="389.0" stroke-opacity="0.029"/>
<line x1="66.0" y1="389.0" x2="124.0" y2="389.0" stroke-opacity="0.037"/>
<line x1="124.0" y1="389.0" x2="182.0" y2="389.0" stroke-opacity="0.043"/>
<line x1="182.0" y1="389.0" x2="240.0" y2="389.0" stroke-opacity="0.048"/>
<line x1="240.0" y1="389.0" x2="298.0" y2="389.0" stroke-opacity="0.050"/>
<line x1="298.0" y1="389.0" x2="356.0" y2="389.0" stroke-opacity="0.050"/>
<line x1="356.0" y1="389.0" x2="414.0" y2="389.0" stroke-opacity="0.047"/>
<line x1="414.0" y1="389.0" x2="472.0" y2="389.0" stroke-opacity="0.043"/>
<line x1="472.0" y1="389.0" x2="530.0" y2="389.0" stroke-opacity="0.036"/>
<line x1="530.0" y1="389.0" x2="588.0" y2="389.0" stroke-opacity="0.028"/>
<line x1="8.0" y1="388.0" x2="66.0" y2="388.0" stroke-opacity="0.024"/>
<line x1="66.0" y1="388.0" x2="124.0" y2="388.0" stroke-opacity="0.032"/>
<line x1="124.0" y1="388.0" x2="182.0" y2="388.0" stroke-opacity="0.039"/>
<line x1="182.0" y1="388.0" x2="240.0" y2="388.0" stroke-opacity="0.043"/>
<line x1="240.0" y1="388.0" x2="298.0" y2="388.0" stroke-opacity="0.046"/>
<line x1="298.0" y1="388.0" x2="356.0" y2="388.0" stroke-opacity="0.045"/>
<line x1="356.0" y1="388.0" x2="414.0" y2="388.0" stroke-opacity="0.043"/>
<line x1="414.0" y1="388.0" x2="472.0" y2="388.0" stroke-opacity="0.038"/>
<line x1="472.0" y1="388.0" x2="530.0" y2="388.0" stroke-opacity="0.032"/>
<line x1="530.0" y1="388.0" x2="588.0" y2="388.0" stroke-opacity="0.023"/>
<line x1="8.0" y1="386.5" x2="66.0" y2="386.5" stroke-opacity="0.019"/>
<line x1="66.0" y1="386.5" x2="124.0" y2="386.5" stroke-opacity="0.028"/>
<line x1="124.0" y1="386.5" x2="182.0" y2="386.5" stroke-opacity="0.034"/>
<line x1="182.0" y1="386.5" x2="240.0" y2="386.5" stroke-opacity="0.039"/>
<line x1="240.0" y1="386.5" x2="298.0" y2="386.5" stroke-opacity="0.041"/>
<line x1="298.0" y1="386.5" x2="356.0" y2="386.5" stroke-opacity="0.041"/>
<line x1="356.0" y1="386.5" x2="414.0" y2="386.5" stroke-opacity="0.039"/>
<line x1="414.0" y1="386.5" x2="472.0" y2="386.5" stroke-opacity="0.034"/>
<line x1="472.0" y1="386.5" x2="530.0" y2="386.5" stroke-opacity="0.027"/>
<line x1="530.0" y1="386.5" x2="588.0" y2="386.5" stroke-opacity="0.018"/>
<line x1="8.0" y1="385.5" x2="66.0" y2="385.5" stroke-opacity="0.014"/>
<line x1="66.0" y1="385.5" x2="124.0" y2="385.5" stroke-opacity="0.023"/>
<line x1="124.0" y1="385.5" x2="182.0" y2="385.5" stroke-opacity="0.030"/>
<line x1="182.0" y1="385.5" x2="240.0" y2="385.5" stroke-opacity="0.035"/>
<line x1="240.0" y1="385.5" x2="298.0" y2="385.5" stroke-opacity="0.037"/>
<line x1="298.0" y1="385.5" x2="356.0" y2="385.5" stroke-opacity="0.037"/>
<line x1="356.0" y1="385.5" x2="414.0" y2="385.5" stroke-opacity="0.035"/>
<line x1="414.0" y1="385.5" x2="472.0" y2="385.5" stroke-opacity="0.030"/>
<line x1="472.0" y1="385.5" x2="530.0" y2="385.5" stroke-opacity="0.023"/>
<line x1="530.0" y1="385.5" x2="588.0" y2="385.5" stroke-opacity="0.014"/>
<line x1="66.0" y1="384.0" x2="124.0" y2="384.0" stroke-opacity="0.018"/>
<line x1="124.0" y1="384.0" x2="182.0" y2="384.0" stroke-opacity="0.026"/>
<line x1="182.0" y1="384.0" x2="240.0" y2="384.0" stroke-opacity="0.031"/>
<line x1="240.0" y1="384.0" x2="298.0" y2="384.0" stroke-opacity="0.033"/>
<line x1="298.0" y1="384.0" x2="356.0" y2="384.0" stroke-opacity="0.033"/>
<line x1="356.0" y1="384.0" x2="414.0" y2="384.0" stroke-opacity="0.030"/>
<line x1="414.0" y1="384.0" x2="472.0" y2="384.0" stroke-opacity="0.025"/>
<line x1="472.0" y1="384.0" x2="530.0" y2="384.0" stroke-opacity="0.018"/>
<line x1="8.0" y1="383.5" x2="66.0" y2="383.5" stroke-opacity="0.201"/>
<line x1="66.0" y1="383.5" x2="124.0" y2="383.5" stroke-opacity="0.231"/>
<line x1="124.0" y1="383.5" x2="182.0" y2="383.5" stroke-opacity="0.255"/>
<line x1="182.0" y1="383.5" x2="240.0" y2="383.5" stroke-opacity="0.271"/>
<line x1="240.0" y1="383.5" x2="298.0" y2="383.5" stroke-opacity="0.279"/>
<line x1="298.0" y1="383.5" x2="356.0" y2="383.5" stroke-opacity="0.279"/>
<line x1="356.0" y1="383.5" x2="414.0" y2="383.5" stroke-opacity="0.270"/>
<line x1="414.0" y1="383.5" x2="472.0" y2="383.5" stroke-opacity="0.253"/>
<line x1="472.0" y1="383.5" x2="530.0" y2="383.5" stroke-opacity="0.229"/>
<line x1="530.0" y1="383.5" x2="588.0" y2="383.5" stroke-opacity="0.199"/>
<line x1="124.0" y1="382.0" x2="182.0" y2="382.0" stroke-opacity="0.017"/>
<line x1="182.0" y1="382.0" x2="240.0" y2="382.0" stroke-opacity="0.022"/>
<line x1="240.0" y1="382.0" x2="298.0" y2="382.0" stroke-opacity="0.025"/>
<line x1="298.0" y1="382.0" x2="356.0" y2="382.0" stroke-opacity="0.025"/>
<line x1="356.0" y1="382.0" x2="414.0" y2="382.0" stroke-opacity="0.022"/>
<line x1="414.0" y1="382.0" x2="472.0" y2="382.0" stroke-opacity="0.016"/>
<line x1="124.0" y1="381.0" x2="182.0" y2="381.0" stroke-opacity="0.012"/>
<line x1="182.0" y1="381.0" x2="240.0" y2="381.0" stroke-opacity="0.018"/>
<line x1="240.0" y1="381.0" x2="298.0" y2="381.0" stroke-opacity="0.021"/>
<line x1="298.0" y1="381.0" x2="356.0" y2="381.0" stroke-opacity="0.020"/>
<line x1="356.0" y1="381.0" x2="414.0" y2="381.0" stroke-opacity="0.018"/>
<line x1="182.0" y1="380.5" x2="240.0" y2="380.5" stroke-opacity="0.014"/>
<line x1="240.0" y1="380.5" x2="298.0" y2="380.5" stroke-opacity="0.016"/>
<line x1="298.0" y1="380.5" x2="356.0" y2="380.5" stroke-opacity="0.016"/>
<line x1="356.0" y1="380.5" x2="414.0" y2="380.5" stroke-opacity="0.013"/>
<line x1="240.0" y1="379.5" x2="298.0" y2="379.5" stroke-opacity="0.012"/>
<line x1="298.0" y1="379.5" x2="356.0" y2="379.5" stroke-opacity="0.012"/>
<line x1="8.0" y1="375.5" x2="66.0" y2="375.5" stroke-opacity="0.045"/>
<line x1="66.0" y1="375.5" x2="124.0" y2="375.5" stroke-opacity="0.084"/>
<line x1="124.0" y1="375.5" x2="182.0" y2="375.5" stroke-opacity="0.114"/>
<line x1="182.0" y1="375.5" x2="240.0" y2="375.5" stroke-opacity="0.135"/>
<line x1="240.0" y1="375.5" x2="298.0" y2="375.5" stroke-opacity="0.145"/>
<line x1="298.0" y1="375.5" x2="356.0" y2="375.5" stroke-opacity="0.145"/>
<line x1="356.0" y1="375.5" x2="414.0" y2="375.5" stroke-opacity="0.134"/>
<line x1="414.0" y1="375.5" x2="472.0" y2="375.5" stroke-opacity="0.112"/>
<line x1="472.0" y1="375.5" x2="530.0" y2="375.5" stroke-opacity="0.081"/>
<line x1="530.0" y1="375.5" x2="588.0" y2="375.5" stroke-opacity="0.042"/>
</g>
<!-- Base Window Prefab -->
<rect x="49" y="94" width="294" height="17" fill="#323232" fill-opacity="0.4"/>
<rect x="49" y="111" width="294" height="120" fill="#06080e" fill-opacity="0.53"/>
<rect x="49" y="231" width="294" height="16.4" fill="#918c8a" fill-opacity="0.8"/>
<text x="57" y="106.3" font-family="Liberation Sans, sans-serif" font-weight="bold" font-size="10.2" fill="#e4e4e4">Base Window Prefab</text>
<rect x="324" y="96.3" width="12.4" height="13.5" fill="#c9460e"/>
<text x="330.2" y="106.2" text-anchor="middle" font-family="Liberation Sans, sans-serif" font-weight="bold" font-size="11.5" fill="#f6ece6">x</text>
<!-- My Customized Window -->
<rect x="90" y="289" width="329" height="17" fill="#323232" fill-opacity="0.4"/>
<rect x="90" y="306" width="329" height="165" fill="#040404" fill-opacity="0.47"/>
<rect x="90" y="471" width="329" height="16.8" fill="#918c8a" fill-opacity="0.8"/>
<rect x="109" y="323" width="50" height="17" fill="#3c3c3e" fill-opacity="0.8"/>
<text x="134" y="335.3" text-anchor="middle" font-family="Liberation Sans, sans-serif" font-weight="bold" font-size="10.5" fill="#d8d8d8">Button</text>
<text x="99" y="301.3" font-family="Liberation Sans, sans-serif" font-weight="bold" font-size="10.2" fill="#e8e8e8">My Customized Window</text>
<rect x="392" y="290.6" width="12.4" height="13.3" fill="#c9460e"/>
<text x="398.2" y="300.4" text-anchor="middle" font-family="Liberation Sans, sans-serif" font-weight="bold" font-size="11.5" fill="#f6ece6">x</text>
<circle cx="410" cy="297.5" r="17" fill="#fff" fill-opacity="0.05"/>
<rect x="405.8" y="293.8" width="8.8" height="8.2" fill="#9a9a9a" fill-opacity="0.45" stroke="#e8e8e8" stroke-opacity="0.85" stroke-width="0.9"/>
<circle cx="410" cy="298" r="3" fill="#b0b0b0" fill-opacity="0.7"/>
<!-- selection outlines -->
<rect x="90.5" y="289" width="328" height="16.8" fill="none" stroke="#fff" stroke-opacity="0.38"/>
<rect x="99.5" y="292.5" width="115" height="10" fill="none" stroke="#fff" stroke-opacity="0.35"/>
<line x1="215" y1="297.5" x2="392" y2="297.5" stroke="#fff" stroke-opacity="0.45"/>
<!-- canvas rect -->
<rect x="22.5" y="73.5" width="529" height="527" fill="none" stroke="#fff" stroke-opacity="0.52"/>
<!-- anchor gizmo -->
<g transform="translate(90.4,289.6)" fill="none" stroke-linejoin="miter">
<g stroke="#222" stroke-opacity="0.75" stroke-width="1.2" stroke-dasharray="1.2 1.2" transform="translate(0.8,0.8)">
<path d="M0 0 L-10 -6.9 L-5.9 -12.5 Z"/><path d="M0 0 L6.3 -11.9 L12.2 -5.7 Z"/><path d="M0 0 L-10 5.9 L-4.7 11.2 Z"/><path d="M0 0 L6.3 10.6 L11.6 5.3 Z"/>
</g>
<g stroke="#fff" stroke-width="1.3">
<path d="M0 0 L-10 -6.9 L-5.9 -12.5 Z"/><path d="M0 0 L6.3 -11.9 L12.2 -5.7 Z"/><path d="M0 0 L-10 5.9 L-4.7 11.2 Z"/><path d="M0 0 L6.3 10.6 L11.6 5.3 Z"/>
</g>
</g>
<!-- orientation gizmo -->
<rect x="530" y="83" width="14" height="14" fill="#f2f2f4"/>
<polygon points="530.8,61.5 543.2,61.5 537.4,80 536.6,80" fill="url(#gG)"/>
<ellipse cx="537" cy="61.5" rx="6.2" ry="1.4" fill="#8ee03a"/>
<polygon points="566.5,84.6 566.5,95.6 547,90.4 547,89.8" fill="url(#gR)"/>
<ellipse cx="566.5" cy="90.1" rx="1.4" ry="5.5" fill="#b02410"/>
<polygon points="508,84.6 508,95.6 528,90.4 528,89.8" fill="url(#gW1)"/>
<ellipse cx="508" cy="90.1" rx="1.3" ry="5.5" fill="#f4f4f4"/>
<polygon points="531,118.3 543,118.3 537.3,100 536.7,100" fill="url(#gW2)"/>
<ellipse cx="537" cy="118.3" rx="6" ry="1.2" fill="#d0d0d0"/>
<text x="537" y="57" text-anchor="middle" font-family="DejaVu Sans, sans-serif" font-weight="bold" font-size="10" fill="#fff">y</text>
<text x="572.3" y="92" text-anchor="middle" font-family="DejaVu Sans, sans-serif" font-weight="bold" font-size="9.5" fill="#fff">x</text>
<path d="M526 134.5 L515 139 L526 143.5 M515 139 H526" stroke="#fff" stroke-opacity="0.5" fill="none" stroke-width="1"/>
<text x="528" y="143.5" font-family="DejaVu Sans, sans-serif" font-size="11" fill="#fff" fill-opacity="0.5" letter-spacing="0.5">Back</text>
<!-- lock -->
<path d="M570 55V53.5Q570 51.5 572 51.5Q574.5 51.5 574.5 53.5" stroke="#c8d0dc" stroke-opacity="0.8" fill="none" stroke-width="1"/>
<rect x="568.5" y="55" width="7" height="5" fill="#c8d0dc" fill-opacity="0.8"/>
</svg>
</div>

<!-- gap between scene and hierarchy -->
<div class="abs" style="left:588px;top:21px;width:4px;height:635px;background:linear-gradient(90deg,#969696,#8a8a8a 40%,#a8a8a8 75%,#989898)"></div>

<!-- Hierarchy tab strip -->
<div class="tab" style="left:591px;width:99px"></div>
<svg class="abs" style="left:600px;top:8px" width="12" height="10" viewBox="0 0 12 10"><path d="M0.5 1.5H2M0.5 4.5H2M0.5 7.5H2M4 1.5H11.5M4 4.5H11.5M4 7.5H11.5" stroke="#444" stroke-width="1"/></svg>
<div class="tabtxt" style="left:615px;top:7px">Hierarchy</div>
<svg class="abs" style="left:805.6px;top:10.6px" width="9" height="10" viewBox="0 0 9 10"><path d="M2.5 5V3Q2.5 0.8 5 0.8Q7.2 0.8 7.2 2.6" stroke="#666" stroke-width="1.1" fill="none"/><rect x="0.5" y="4.5" width="7" height="5" fill="#555"/></svg>
<svg class="abs" style="left:819.4px;top:14.6px" width="14" height="6" viewBox="0 0 14 6"><path d="M0 1.6H4.6L2.3 4.6Z" fill="#555"/><path d="M5.6 0.5H13.6M5.6 2.5H13.6M5.6 4.5H13.6" stroke="#555" stroke-width="1"/></svg>

<!-- Hierarchy toolbar -->
<div class="tb" style="left:592px;width:244px">
  <div class="sep" style="left:5px"></div>
  <div class="tbt" style="left:11.6px">Create</div>
  <div class="dd" style="left:48px;top:6.5px"></div>
  <div class="sep" style="left:57px"></div>
  <div class="search" style="left:65px;width:138px"></div>
  <svg class="abs" style="left:68px;top:3px" width="14" height="11" viewBox="0 0 14 11"><circle cx="4.5" cy="4.5" r="3" fill="none" stroke="#777" stroke-width="1.2"/><path d="M6.7 6.7L9 9.5" stroke="#777" stroke-width="1.3"/><path d="M9 3.5H13L11 6Z" fill="#777"/></svg>
  <div class="tbt" style="left:81px;top:2px;color:#7c7c7c;font-size:11.5px;letter-spacing:.3px">All</div>
  <div class="sep" style="left:209px"></div>
  <svg class="abs" style="left:215px;top:2px" width="20" height="13" viewBox="0 0 20 13"><path d="M6.5 0.5V7M6.5 7L1.5 10.5M6.5 7L11.5 10.5" stroke="#333" stroke-width="1.2" fill="none"/><path d="M9.5 1.5H17M9.5 4.5H17M12.5 7.5H17M14.5 10.5H17" stroke="#333" stroke-width="1.2"/></svg>
  <div class="sep" style="left:238px"></div>
</div>

<!-- Hierarchy content -->
<div id="hier" class="abs">
  <div class="abs" style="left:0;top:18px;width:6px;height:599px;background:linear-gradient(90deg,#cfcfcf,#c2c2c2)"></div>
  <div class="abs" style="left:0;top:0;width:244px;height:18px;background:linear-gradient(#dedede,#d4d4d4);border-bottom:1px solid #979797;box-sizing:border-box"></div>
  <span class="ad" style="left:4px;top:5px"></span>
  <svg class="abs" style="left:16.4px;top:1px" width="17" height="15" viewBox="0 0 16 15" preserveAspectRatio="none"><path d="M1.8 6.9 L12.5 1.3 Q14.9 6.9 12.5 12.7 Z" fill="#fdfdfd" stroke="#141414" stroke-width="1.7" stroke-linejoin="round"/><path d="M9.4 6.9 L2 6.9 M9.4 6.9 L12.4 1.6 M9.4 6.9 L12.4 12.4" stroke="#141414" stroke-width="1.6" fill="none"/></svg>
  <div class="lb" style="left:34.4px;top:3px;font-weight:bold;letter-spacing:.25px">SampleScene*</div>
  <svg class="abs" style="left:227.4px;top:6.1px" width="14" height="6" viewBox="0 0 14 6"><path d="M0 1.6H4.6L2.3 4.6Z" fill="#555"/><path d="M5.6 0.5H13.6M5.6 2.5H13.6M5.6 4.5H13.6" stroke="#555" stroke-width="1"/></svg>
<div class="row" style="top:16px"><span class="icw" style="left:31px"><svg class="ic" style="margin:0.6px 0 0 1.4px" width="13" height="12.5" viewBox="0 0 13 12.5"><path d="M0.4 1.8 Q6.5 -0.4 12.6 1.8 L12.4 9.7 L6.3 12.3 L0.6 9.9 Z" fill="#4aaee2"/><path d="M0.4 1.8 Q6.5 -0.4 12.6 1.8 L6.3 4.1 Z" fill="url(#ct)"/><path d="M12.6 1.8 L6.3 4.1 L6.3 12.3 L12.4 9.7 Z" fill="#e63e18"/><path d="M12.6 1.8 L6.3 4.1 L6.3 5.6 L12.55 3.3 Z" fill="#f0862c" opacity=".8"/><path d="M0.4 1.8 L2.6 2.7 L2.7 10.8 L0.6 9.9 Z" fill="#7cc8f0" opacity=".45"/></svg></span><span class="lb" style="left:48px;color:#000">Main Camera</span></div>
<div class="row" style="top:32px"><span class="icw" style="left:31px"><svg class="ic" style="margin:0.6px 0 0 1.4px" width="13" height="12.5" viewBox="0 0 13 12.5"><path d="M0.4 1.8 Q6.5 -0.4 12.6 1.8 L12.4 9.7 L6.3 12.3 L0.6 9.9 Z" fill="#4aaee2"/><path d="M0.4 1.8 Q6.5 -0.4 12.6 1.8 L6.3 4.1 Z" fill="url(#ct)"/><path d="M12.6 1.8 L6.3 4.1 L6.3 12.3 L12.4 9.7 Z" fill="#e63e18"/><path d="M12.6 1.8 L6.3 4.1 L6.3 5.6 L12.55 3.3 Z" fill="#f0862c" opacity=".8"/><path d="M0.4 1.8 L2.6 2.7 L2.7 10.8 L0.6 9.9 Z" fill="#7cc8f0" opacity=".45"/></svg></span><span class="lb" style="left:48px;color:#000">Directional Light</span></div>
<div class="row" style="top:48px"><span class="icw" style="left:31px"><svg class="ic" style="margin:0.6px 0 0 1.4px" width="13" height="12.5" viewBox="0 0 13 12.5"><path d="M0.4 1.8 Q6.5 -0.4 12.6 1.8 L12.4 9.7 L6.3 12.3 L0.6 9.9 Z" fill="#4aaee2"/><path d="M0.4 1.8 Q6.5 -0.4 12.6 1.8 L6.3 4.1 Z" fill="url(#ct)"/><path d="M12.6 1.8 L6.3 4.1 L6.3 12.3 L12.4 9.7 Z" fill="#e63e18"/><path d="M12.6 1.8 L6.3 4.1 L6.3 5.6 L12.55 3.3 Z" fill="#f0862c" opacity=".8"/><path d="M0.4 1.8 L2.6 2.7 L2.7 10.8 L0.6 9.9 Z" fill="#7cc8f0" opacity=".45"/></svg></span><span class="lb" style="left:48px;color:#000">EventSystem</span></div>
<div class="row" style="top:64px"><span class="ad" style="left:19px"></span><span class="icw" style="left:31px"><svg class="ic" style="margin:0.6px 0 0 1.4px" width="13" height="12.5" viewBox="0 0 13 12.5"><path d="M0.4 1.8 Q6.5 -0.4 12.6 1.8 L12.4 9.7 L6.3 12.3 L0.6 9.9 Z" fill="#4aaee2"/><path d="M0.4 1.8 Q6.5 -0.4 12.6 1.8 L6.3 4.1 Z" fill="url(#ct)"/><path d="M12.6 1.8 L6.3 4.1 L6.3 12.3 L12.4 9.7 Z" fill="#e63e18"/><path d="M12.6 1.8 L6.3 4.1 L6.3 5.6 L12.55 3.3 Z" fill="#f0862c" opacity=".8"/><path d="M0.4 1.8 L2.6 2.7 L2.7 10.8 L0.6 9.9 Z" fill="#7cc8f0" opacity=".45"/></svg></span><span class="lb" style="left:48px;color:#000">Canvas</span></div>
<div class="row" style="top:79px"><span class="ad" style="left:33px"></span><span class="icw" style="left:45px"><svg class="ic" style="margin:-0.5px 0 0 0.6px" width="14" height="14" viewBox="0 0 14 14"><path d="M1 3.2 L7 0.6 L13 3.2 L13 10.6 L7 13.6 L1 10.6 Z" fill="#46a2da" stroke="#46a2da" stroke-width="1" stroke-linejoin="round"/><path d="M1 3.2 L7 0.6 L13 3.2 L7 5.8 Z" fill="#90d6f6"/><path d="M7 5.8 L13 3.2 L13 10.6 L7 13.6 Z" fill="#3a92cc"/><path d="M2.5 3.3 L7 1.6 L11 3.2 L7 4.6 Z" fill="#bce8fc" opacity=".7"/></svg></span><span class="lb" style="left:62px;color:#111f6c">Window</span><svg class="chev" style="margin-top:1px" width="7" height="10" viewBox="0 0 8 11"><path d="M1.2 1 L6.6 5.5 L1.2 10" stroke="#808080" stroke-width="1.8" fill="none"/></svg></div>
<div class="row" style="top:95px"><span class="ar" style="left:48px"></span><span class="icw" style="left:59px"><svg class="ic" style="margin:0.6px 0 0 1.4px" width="13" height="12.5" viewBox="0 0 13 12.5"><path d="M0.4 1.8 Q6.5 -0.4 12.6 1.8 L12.4 9.7 L6.3 12.3 L0.6 9.9 Z" fill="#4aaee2"/><path d="M0.4 1.8 Q6.5 -0.4 12.6 1.8 L6.3 4.1 Z" fill="url(#ct)"/><path d="M12.6 1.8 L6.3 4.1 L6.3 12.3 L12.4 9.7 Z" fill="#e63e18"/><path d="M12.6 1.8 L6.3 4.1 L6.3 5.6 L12.55 3.3 Z" fill="#f0862c" opacity=".8"/><path d="M0.4 1.8 L2.6 2.7 L2.7 10.8 L0.6 9.9 Z" fill="#7cc8f0" opacity=".45"/></svg></span><span class="lb" style="left:76px;color:#111f6c">Titlebar</span></div>
<div class="row" style="top:111px"><span class="icw" style="left:59px"><svg class="ic" style="margin:0.6px 0 0 1.4px" width="13" height="12.5" viewBox="0 0 13 12.5"><path d="M0.4 1.8 Q6.5 -0.4 12.6 1.8 L12.4 9.7 L6.3 12.3 L0.6 9.9 Z" fill="#4aaee2"/><path d="M0.4 1.8 Q6.5 -0.4 12.6 1.8 L6.3 4.1 Z" fill="url(#ct)"/><path d="M12.6 1.8 L6.3 4.1 L6.3 12.3 L12.4 9.7 Z" fill="#e63e18"/><path d="M12.6 1.8 L6.3 4.1 L6.3 5.6 L12.55 3.3 Z" fill="#f0862c" opacity=".8"/><path d="M0.4 1.8 L2.6 2.7 L2.7 10.8 L0.6 9.9 Z" fill="#7cc8f0" opacity=".45"/></svg></span><span class="lb" style="left:76px;color:#111f6c">Content</span></div>
<div class="row" style="top:127px"><span class="icw" style="left:59px"><svg class="ic" style="margin:0.6px 0 0 1.4px" width="13" height="12.5" viewBox="0 0 13 12.5"><path d="M0.4 1.8 Q6.5 -0.4 12.6 1.8 L12.4 9.7 L6.3 12.3 L0.6 9.9 Z" fill="#4aaee2"/><path d="M0.4 1.8 Q6.5 -0.4 12.6 1.8 L6.3 4.1 Z" fill="url(#ct)"/><path d="M12.6 1.8 L6.3 4.1 L6.3 12.3 L12.4 9.7 Z" fill="#e63e18"/><path d="M12.6 1.8 L6.3 4.1 L6.3 5.6 L12.55 3.3 Z" fill="#f0862c" opacity=".8"/><path d="M0.4 1.8 L2.6 2.7 L2.7 10.8 L0.6 9.9 Z" fill="#7cc8f0" opacity=".45"/></svg></span><span class="lb" style="left:76px;color:#111f6c">StatusBar</span></div>
<div class="row" style="top:143px"><span class="ad" style="left:33px"></span><span class="icw" style="left:45px"><svg class="ic" style="margin:-0.5px 0 0 0.6px" width="14" height="14" viewBox="0 0 14 14"><path d="M1 3.2 L7 0.6 L13 3.2 L13 10.6 L7 13.6 L1 10.6 Z" fill="#46a2da" stroke="#46a2da" stroke-width="1" stroke-linejoin="round"/><path d="M1 3.2 L7 0.6 L13 3.2 L7 5.8 Z" fill="#90d6f6"/><path d="M7 5.8 L13 3.2 L13 10.6 L7 13.6 Z" fill="#3a92cc"/><path d="M2.6 5.6 L6.8 10.8 L11.6 5.2" stroke="#1f5a96" stroke-width="2.6" fill="none"/><path d="M4 3.4 L7 2 L10 3.2 L7 4.4 Z" fill="#d0f0ff" opacity=".8"/></svg></span><span class="lb" style="left:62px;color:#111f6c">MyWindow</span><svg class="chev" style="margin-top:1px" width="7" height="10" viewBox="0 0 8 11"><path d="M1.2 1 L6.6 5.5 L1.2 10" stroke="#808080" stroke-width="1.8" fill="none"/></svg></div>
<div class="row" style="top:159px"><span class="ad" style="left:47px"></span><span class="icw" style="left:59px"><svg class="ic" style="margin:0.6px 0 0 1.4px" width="13" height="12.5" viewBox="0 0 13 12.5"><path d="M0.4 1.8 Q6.5 -0.4 12.6 1.8 L12.4 9.7 L6.3 12.3 L0.6 9.9 Z" fill="#4aaee2"/><path d="M0.4 1.8 Q6.5 -0.4 12.6 1.8 L6.3 4.1 Z" fill="url(#ct)"/><path d="M12.6 1.8 L6.3 4.1 L6.3 12.3 L12.4 9.7 Z" fill="#e63e18"/><path d="M12.6 1.8 L6.3 4.1 L6.3 5.6 L12.55 3.3 Z" fill="#f0862c" opacity=".8"/><path d="M0.4 1.8 L2.6 2.7 L2.7 10.8 L0.6 9.9 Z" fill="#7cc8f0" opacity=".45"/></svg></span><span class="lb" style="left:76px;color:#111f6c">Titlebar</span></div>
<div class="row" style="top:175px"><span class="icw" style="left:73px"><svg class="ic" style="margin:0.6px 0 0 1.4px" width="13" height="12.5" viewBox="0 0 13 12.5"><path d="M0.4 1.8 Q6.5 -0.4 12.6 1.8 L12.4 9.7 L6.3 12.3 L0.6 9.9 Z" fill="#4aaee2"/><path d="M0.4 1.8 Q6.5 -0.4 12.6 1.8 L6.3 4.1 Z" fill="url(#ct)"/><path d="M12.6 1.8 L6.3 4.1 L6.3 12.3 L12.4 9.7 Z" fill="#e63e18"/><path d="M12.6 1.8 L6.3 4.1 L6.3 5.6 L12.55 3.3 Z" fill="#f0862c" opacity=".8"/><path d="M0.4 1.8 L2.6 2.7 L2.7 10.8 L0.6 9.9 Z" fill="#7cc8f0" opacity=".45"/></svg></span><span class="lb" style="left:90px;color:#111f6c">Text</span></div>
<div class="row" style="top:191px"><span class="icw" style="left:73px"><svg class="ic" style="margin:0.6px 0 0 1.4px" width="13" height="12.5" viewBox="0 0 13 12.5"><path d="M0.4 1.8 Q6.5 -0.4 12.6 1.8 L12.4 9.7 L6.3 12.3 L0.6 9.9 Z" fill="#4aaee2"/><path d="M0.4 1.8 Q6.5 -0.4 12.6 1.8 L6.3 4.1 Z" fill="url(#ct)"/><path d="M12.6 1.8 L6.3 4.1 L6.3 12.3 L12.4 9.7 Z" fill="#e63e18"/><path d="M12.6 1.8 L6.3 4.1 L6.3 5.6 L12.55 3.3 Z" fill="#f0862c" opacity=".8"/><path d="M0.4 1.8 L2.6 2.7 L2.7 10.8 L0.6 9.9 Z" fill="#7cc8f0" opacity=".45"/></svg></span><span class="lb" style="left:90px;color:#111f6c">-</span></div>
<div class="row" style="top:207px"><span class="ar" style="left:62px"></span><span class="icw" style="left:73px"><svg class="ic" style="margin:0.6px 0 0 1.4px" width="13" height="12.5" viewBox="0 0 13 12.5"><path d="M0.4 1.8 Q6.5 -0.4 12.6 1.8 L12.4 9.7 L6.3 12.3 L0.6 9.9 Z" fill="#4aaee2"/><path d="M0.4 1.8 Q6.5 -0.4 12.6 1.8 L6.3 4.1 Z" fill="url(#ct)"/><path d="M12.6 1.8 L6.3 4.1 L6.3 12.3 L12.4 9.7 Z" fill="#e63e18"/><path d="M12.6 1.8 L6.3 4.1 L6.3 5.6 L12.55 3.3 Z" fill="#f0862c" opacity=".8"/><path d="M0.4 1.8 L2.6 2.7 L2.7 10.8 L0.6 9.9 Z" fill="#7cc8f0" opacity=".45"/></svg></span><span class="lb" style="left:90px;color:#111f6c">CloseButton</span></div>
<div class="row sel" style="top:224px"><span class="icw" style="left:73px"><svg class="ic" style="margin:0.6px 0 0 1.4px" width="13" height="12.5" viewBox="0 0 13 12.5"><path d="M0.4 1.8 Q6.5 -0.4 12.6 1.8 L12.4 9.7 L6.3 12.3 L0.6 9.9 Z" fill="#4aaee2"/><path d="M0.4 1.8 Q6.5 -0.4 12.6 1.8 L6.3 4.1 Z" fill="url(#ct)"/><path d="M12.6 1.8 L6.3 4.1 L6.3 12.3 L12.4 9.7 Z" fill="#e63e18"/><path d="M12.6 1.8 L6.3 4.1 L6.3 5.6 L12.55 3.3 Z" fill="#f0862c" opacity=".8"/><path d="M0.4 1.8 L2.6 2.7 L2.7 10.8 L0.6 9.9 Z" fill="#7cc8f0" opacity=".45"/></svg></span><span class="plus" style="left:80px"><svg width="9" height="9" viewBox="0 0 9 9"><circle cx="4.5" cy="4.5" r="4.2" fill="#f4f4f4"/><path d="M4.5 1.4V7.6M1.4 4.5H7.6" stroke="#111" stroke-width="2"/></svg></span><span class="lb" style="left:90px;color:#fff">Panel</span></div>
<div class="row" style="top:240px"><span class="ad" style="left:47px"></span><span class="icw" style="left:59px"><svg class="ic" style="margin:0.6px 0 0 1.4px" width="13" height="12.5" viewBox="0 0 13 12.5"><path d="M0.4 1.8 Q6.5 -0.4 12.6 1.8 L12.4 9.7 L6.3 12.3 L0.6 9.9 Z" fill="#4aaee2"/><path d="M0.4 1.8 Q6.5 -0.4 12.6 1.8 L6.3 4.1 Z" fill="url(#ct)"/><path d="M12.6 1.8 L6.3 4.1 L6.3 12.3 L12.4 9.7 Z" fill="#e63e18"/><path d="M12.6 1.8 L6.3 4.1 L6.3 5.6 L12.55 3.3 Z" fill="#f0862c" opacity=".8"/><path d="M0.4 1.8 L2.6 2.7 L2.7 10.8 L0.6 9.9 Z" fill="#7cc8f0" opacity=".45"/></svg></span><span class="lb" style="left:76px;color:#111f6c">Content</span></div>
<div class="row" style="top:255px"><span class="ar" style="left:62px"></span><span class="icw" style="left:73px"><svg class="ic" style="margin:-0.5px 0 0 0.6px" width="14" height="14" viewBox="0 0 14 14"><path d="M1 3.2 L7 0.6 L13 3.2 L13 10.6 L7 13.6 L1 10.6 Z" fill="#46a2da" stroke="#46a2da" stroke-width="1" stroke-linejoin="round"/><path d="M1 3.2 L7 0.6 L13 3.2 L7 5.8 Z" fill="#90d6f6"/><path d="M7 5.8 L13 3.2 L13 10.6 L7 13.6 Z" fill="#3a92cc"/><path d="M2.5 3.3 L7 1.6 L11 3.2 L7 4.6 Z" fill="#bce8fc" opacity=".7"/></svg></span><span class="lb" style="left:90px;color:#111f6c">Button</span><svg class="chev" style="margin-top:0px" width="7" height="10" viewBox="0 0 8 11"><path d="M1.2 1 L6.6 5.5 L1.2 10" stroke="#808080" stroke-width="1.8" fill="none"/></svg></div>
<div class="row" style="top:271px"><span class="icw" style="left:59px"><svg class="ic" style="margin:0.6px 0 0 1.4px" width="13" height="12.5" viewBox="0 0 13 12.5"><path d="M0.4 1.8 Q6.5 -0.4 12.6 1.8 L12.4 9.7 L6.3 12.3 L0.6 9.9 Z" fill="#4aaee2"/><path d="M0.4 1.8 Q6.5 -0.4 12.6 1.8 L6.3 4.1 Z" fill="url(#ct)"/><path d="M12.6 1.8 L6.3 4.1 L6.3 12.3 L12.4 9.7 Z" fill="#e63e18"/><path d="M12.6 1.8 L6.3 4.1 L6.3 5.6 L12.55 3.3 Z" fill="#f0862c" opacity=".8"/><path d="M0.4 1.8 L2.6 2.7 L2.7 10.8 L0.6 9.9 Z" fill="#7cc8f0" opacity=".45"/></svg></span><span class="lb" style="left:76px;color:#111f6c">StatusBar</span></div>
</div>

<!-- right neighbouring panel sliver -->
<div class="abs" style="left:840px;top:6px;width:4px;height:670px;background:linear-gradient(180deg,#e6e6e6 0,#e6e6e6 33px,#9a9a9a 33px,#9a9a9a 34px,#dadada 34px,#dadada 287px,#8c8c8c 287px,#8c8c8c 288px,#d6d6d6 288px,#d6d6d6 306px,#8c8c8c 306px,#8c8c8c 307px,#d2d2d2 307px,#d2d2d2 432px,#8c8c8c 432px,#8c8c8c 433px,#e8e8e8 433px,#e8e8e8 489px,#8c8c8c 489px,#8c8c8c 490px,#cccccc 490px,#cccccc 496px,#9a9a9a 496px,#9a9a9a 497px,#c8c8c8 497px,#c6c6c6 670px)"></div>
<div class="abs" style="left:836px;top:5px;width:4px;height:671px;background:linear-gradient(90deg,#a0a0a0,#8a8a8a 35%,#949494 70%,#808080)"></div>

<!-- bottom strip -->
<div class="abs" style="left:0;top:656px;width:836px;height:20px;background:linear-gradient(#a6a6a6,#a2a2a2 8px);border-top:1px solid #8e8e8e;box-sizing:border-box"></div>
<svg class="abs" style="left:806px;top:665px" width="9" height="10" viewBox="0 0 9 10"><path d="M2.5 5V3Q2.5 0.8 5 0.8Q7.2 0.8 7.2 2.6" stroke="#666" stroke-width="1.1" fill="none"/><rect x="0.5" y="4.5" width="7" height="5" fill="#555"/></svg>
<svg class="abs" style="left:819.4px;top:670.1px" width="14" height="6" viewBox="0 0 14 6"><path d="M0 1.6H4.6L2.3 4.6Z" fill="#555"/><path d="M5.6 0.5H13.6M5.6 2.5H13.6M5.6 4.5H13.6" stroke="#555" stroke-width="1"/></svg>

<!-- mouse cursor -->
<svg class="abs" style="left:675.4px;top:435.4px" width="13" height="19.5" viewBox="0 0 14 21"><path d="M1 1V17L5 13.2L7.6 19.5L10.2 18.4L7.6 12.2H13Z" fill="#fff" stroke="#1a1a1a" stroke-width="1.2" stroke-linejoin="round"/></svg>
</body></html>
